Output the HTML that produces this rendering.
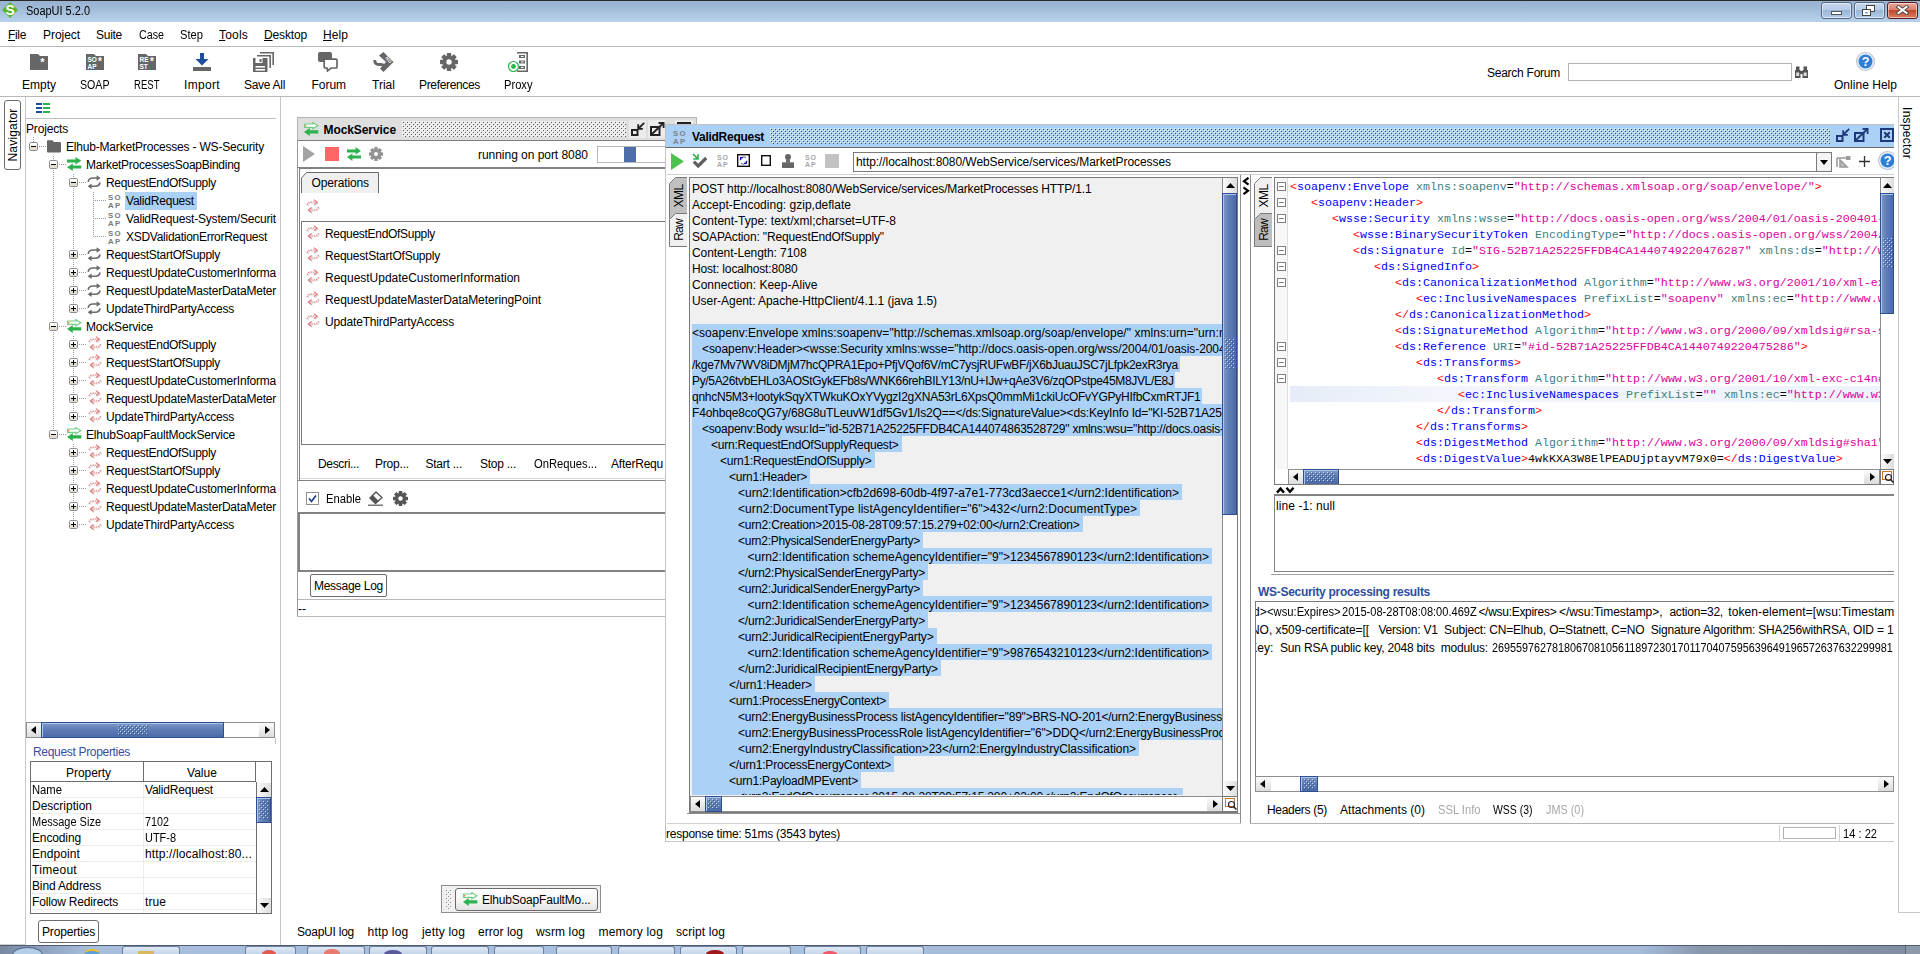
<!DOCTYPE html>
<html><head><meta charset="utf-8"><title>SoapUI 5.2.0</title>
<style>
html,body{margin:0;padding:0;}
body{width:1920px;height:954px;overflow:hidden;position:relative;background:#fff;font-family:"Liberation Sans",sans-serif;font-size:12px;color:#000;}
body div,body span,body svg{position:absolute;}
body span{white-space:pre;}
body span span, body svg *{position:static;}
.m{font-family:"Liberation Mono",monospace;}
</style></head><body>
<div style="left:0px;top:0px;width:1920px;height:22px;background:linear-gradient(#98b3d1 0%,#9db7d5 30%,#b0c9e4 75%,#b8d0ea 100%);"></div>
<div style="left:0px;top:0px;width:1920px;height:1px;background:#2b2b2b;"></div>
<svg style="left:2px;top:2px;" width="16" height="16" viewBox="0 0 18 18"><polygon points="9,0 18,9 9,18 0,9" fill="#5cb531"/><text x="9" y="14.6" text-anchor="middle" font-family="Liberation Sans,sans-serif" font-weight="bold" font-size="15.5" fill="#fff">S</text></svg>
<span style="left:26px;top:3.0px;line-height:16px;transform:scaleX(0.9135);transform-origin:0 50%;">SoapUI 5.2.0</span>
<div style="left:1821px;top:2px;width:31px;height:17px;background:linear-gradient(#c6d8ee,#b4cae6 48%,#9bb6d8 50%,#b3cbe8);border:1px solid #566a88;border-radius:3px;box-sizing:border-box;box-shadow:inset 0 0 0 1px rgba(255,255,255,.5);"></div>
<div style="left:1854px;top:2px;width:31px;height:17px;background:linear-gradient(#c6d8ee,#b4cae6 48%,#9bb6d8 50%,#b3cbe8);border:1px solid #566a88;border-radius:3px;box-sizing:border-box;box-shadow:inset 0 0 0 1px rgba(255,255,255,.5);"></div>
<div style="left:1887px;top:2px;width:31px;height:17px;background:linear-gradient(#e8a898,#d97f6a 48%,#c4452c 50%,#d98262);border:1px solid #5a1a22;border-radius:3px;box-sizing:border-box;box-shadow:inset 0 0 0 1px rgba(255,255,255,.5);"></div>
<div style="left:1831px;top:11px;width:11px;height:4px;background:#fff;border:1px solid #555;box-sizing:border-box;"></div>
<svg style="left:1862px;top:5px;" width="14" height="12" viewBox="0 0 14 12"><rect x="4.5" y="0.5" width="8" height="6" fill="#fff" stroke="#444"/><rect x="0.5" y="4.5" width="8" height="6" fill="#fff" stroke="#444"/><rect x="3" y="7" width="3" height="1.5" fill="#8aa4c8"/></svg>
<svg style="left:1896px;top:5px;" width="13" height="10" viewBox="0 0 13 10"><path d="M2.5 2 L10.5 8 M10.5 2 L2.5 8" stroke="#444" stroke-width="3.8" stroke-linecap="square"/><path d="M2.5 2 L10.5 8 M10.5 2 L2.5 8" stroke="#fff" stroke-width="2" stroke-linecap="square"/></svg>
<div style="left:0px;top:22px;width:1920px;height:24px;background:#fff;"></div>
<div style="left:0px;top:46px;width:1920px;height:1px;background:#b8b8b8;"></div>
<span style="left:8px;top:27.0px;line-height:16px;letter-spacing:-0.336px;"><span style="text-decoration:underline">F</span>ile</span>
<span style="left:43px;top:27.0px;line-height:16px;letter-spacing:-0.051px;">Project</span>
<span style="left:96px;top:27.0px;line-height:16px;letter-spacing:-0.272px;">Suite</span>
<span style="left:139px;top:27.0px;line-height:16px;transform:scaleX(0.8924);transform-origin:0 50%;">Case</span>
<span style="left:180px;top:27.0px;line-height:16px;transform:scaleX(0.9316);transform-origin:0 50%;">Step</span>
<span style="left:219px;top:27.0px;line-height:16px;letter-spacing:0.197px;"><span style="text-decoration:underline">T</span>ools</span>
<span style="left:264px;top:27.0px;line-height:16px;letter-spacing:-0.147px;"><span style="text-decoration:underline">D</span>esktop</span>
<span style="left:323px;top:27.0px;line-height:16px;letter-spacing:0.078px;"><span style="text-decoration:underline">H</span>elp</span>
<div style="left:0px;top:47px;width:1920px;height:49px;background:#fff;"></div>
<div style="left:0px;top:96px;width:1920px;height:1px;background:#b8b8b8;"></div>
<span style="left:22px;top:77.0px;line-height:16px;letter-spacing:-0.003px;">Empty</span>
<span style="left:80px;top:77.0px;line-height:16px;transform:scaleX(0.8843);transform-origin:0 50%;">SOAP</span>
<span style="left:134px;top:77.0px;line-height:16px;transform:scaleX(0.7965);transform-origin:0 50%;">REST</span>
<span style="left:184px;top:77.0px;line-height:16px;letter-spacing:0.331px;">Import</span>
<span style="left:244px;top:77.0px;line-height:16px;letter-spacing:-0.295px;">Save All</span>
<span style="left:311.5px;top:77.0px;line-height:16px;letter-spacing:-0.034px;">Forum</span>
<span style="left:372px;top:77.0px;line-height:16px;letter-spacing:0.022px;">Trial</span>
<span style="left:419px;top:77.0px;line-height:16px;letter-spacing:-0.337px;">Preferences</span>
<span style="left:504px;top:77.0px;line-height:16px;transform:scaleX(0.9287);transform-origin:0 50%;">Proxy</span>
<svg style="left:30px;top:53px;" width="18" height="17" viewBox="0 0 18 17"><path d="M0 1 H8 L10 3 H18 V17 H0 Z" fill="#666"/><text x="12.5" y="12.5" text-anchor="middle" font-size="11" font-family="Liberation Sans,sans-serif" font-weight="bold" fill="#fff">*</text></svg>
<svg style="left:86px;top:53px;" width="18" height="17" viewBox="0 0 18 17"><path d="M0 1 H8 L10 3 H18 V17 H0 Z" fill="#666"/><text x="1.5" y="9" font-size="6.5" font-family="Liberation Sans,sans-serif" font-weight="bold" fill="#fff">SO</text><text x="1.5" y="15.5" font-size="6.5" font-family="Liberation Sans,sans-serif" font-weight="bold" fill="#fff">AP</text><text x="14" y="12" text-anchor="middle" font-size="10" font-family="Liberation Sans,sans-serif" font-weight="bold" fill="#fff">*</text></svg>
<svg style="left:138px;top:53px;" width="18" height="17" viewBox="0 0 18 17"><path d="M0 1 H8 L10 3 H18 V17 H0 Z" fill="#666"/><text x="1.5" y="9" font-size="6.5" font-family="Liberation Sans,sans-serif" font-weight="bold" fill="#fff">RE</text><text x="1.5" y="15.5" font-size="6.5" font-family="Liberation Sans,sans-serif" font-weight="bold" fill="#fff">ST</text><text x="14" y="12" text-anchor="middle" font-size="10" font-family="Liberation Sans,sans-serif" font-weight="bold" fill="#fff">*</text></svg>
<svg style="left:193px;top:52px;" width="18" height="20" viewBox="0 0 18 20"><path d="M7 1 H11 V7 H15.5 L9 13.5 L2.5 7 H7 Z" fill="#1c4da0"/><rect x="0" y="15" width="18" height="4" fill="#666"/></svg>
<svg style="left:253px;top:52px;" width="21" height="20" viewBox="0 0 21 20"><path d="M7 0.8 H20.2 V13" fill="none" stroke="#666" stroke-width="1.6"/><path d="M4 3.8 H17.2 V16" fill="none" stroke="#666" stroke-width="1.6"/><path d="M0 6 H14.5 V20 H0 Z" fill="#666"/><rect x="2.5" y="6" width="7" height="5" fill="#fff"/><rect x="6.5" y="7" width="2" height="3" fill="#666"/><rect x="2.5" y="14" width="9.5" height="1.6" fill="#fff"/><rect x="2.5" y="17" width="9.5" height="1.6" fill="#fff"/></svg>
<svg style="left:318px;top:52px;" width="20" height="20" viewBox="0 0 20 20"><rect x="0" y="0" width="14" height="10" rx="2" fill="#666"/><path d="M7.2 7.2 H18 Q19 7.2 19 8.2 V15 Q19 16 18 16 H13 L9.5 19 L9 16 H7.2 Q6.2 16 6.2 15 V8.2 Q6.2 7.2 7.2 7.2 Z" fill="#fff" stroke="#666" stroke-width="1.7"/></svg>
<svg style="left:373px;top:52px;" width="21" height="20" viewBox="0 0 21 20"><polygon points="10.5,0 20.5,10 10.5,20 7,16.5 13,10 6,3.5" fill="#666"/><path d="M2 8 Q1 13 8 12.5 Q12 12.5 10 17" fill="none" stroke="#666" stroke-width="3"/><text x="14.5" y="9" font-size="4.5" text-anchor="middle" font-family="Liberation Sans,sans-serif" font-weight="bold" fill="#fff" transform="rotate(45 14.5 9)">NG</text></svg>
<svg style="left:440px;top:53px;" width="18" height="18" viewBox="0 0 18 18"><g transform="translate(9 9)" fill="#666"><rect x="-2.2" y="-9" width="4.4" height="18" rx="0.6" transform="rotate(0)"/><rect x="-2.2" y="-9" width="4.4" height="18" rx="0.6" transform="rotate(45)"/><rect x="-2.2" y="-9" width="4.4" height="18" rx="0.6" transform="rotate(90)"/><rect x="-2.2" y="-9" width="4.4" height="18" rx="0.6" transform="rotate(135)"/><circle r="6.6"/><circle r="2.7" fill="#fff"/></g></svg>
<svg style="left:508px;top:52px;" width="20" height="20" viewBox="0 0 20 20"><path d="M9 0.8 H19.2 V19.2 H9" fill="none" stroke="#666" stroke-width="1.6"/><rect x="11" y="3" width="6" height="3" fill="#666"/><rect x="11" y="8.5" width="6" height="3" fill="#666"/><rect x="11" y="14" width="6" height="3" fill="#666"/><rect x="13" y="4" width="2.5" height="1" fill="#fff"/><rect x="13" y="9.5" width="2.5" height="1" fill="#fff"/><rect x="13" y="15" width="2.5" height="1" fill="#fff"/><circle cx="5.5" cy="14.5" r="5" fill="#fff" stroke="#2db34a" stroke-width="1.2"/><circle cx="5.5" cy="14.5" r="2.4" fill="#2db34a"/></svg>
<span style="left:1487px;top:65.0px;line-height:16px;letter-spacing:-0.253px;">Search Forum</span>
<div style="left:1568px;top:63px;width:222px;height:16px;border:1px solid #b5b5b5;background:#fff;"></div>
<svg style="left:1795px;top:66px;" width="13" height="12" viewBox="0 0 13 12"><rect x="0" y="4" width="5.5" height="8" fill="#555"/><rect x="7.5" y="4" width="5.5" height="8" fill="#555"/><rect x="1" y="0.5" width="3.5" height="4" fill="#555"/><rect x="8.5" y="0.5" width="3.5" height="4" fill="#555"/><rect x="5" y="5" width="3" height="3" fill="#555"/><rect x="1.2" y="6.5" width="3" height="3.5" fill="#ddd"/><rect x="8.7" y="6.5" width="3" height="3.5" fill="#ddd"/></svg>
<svg style="left:1856px;top:52px;" width="19" height="19" viewBox="0 0 18 18"><circle cx="9" cy="9" r="8.5" fill="#e8eef6" stroke="#b8c4d4"/><circle cx="9" cy="9" r="6.6" fill="#2f7fd6"/><text x="9" y="13.2" text-anchor="middle" font-family="Liberation Sans,sans-serif" font-weight="bold" font-size="12" fill="#fff">?</text></svg>
<span style="left:1834px;top:77.0px;line-height:16px;letter-spacing:0.027px;">Online Help</span>
<div style="left:25px;top:97px;width:1px;height:849px;background:#c8c8c8;"></div>
<div style="left:4px;top:100px;width:17px;height:70px;background:#fff;border:1px solid #6b6b6b;border-radius:3px;box-sizing:border-box;"></div>
<span style="left:0px;top:-8.0px;line-height:16px;letter-spacing:0.182px;left:-22px;top:126.5px;width:70px;text-align:center;transform:rotate(-90deg);transform-origin:center;line-height:16px;">Navigator</span>
<div style="left:280px;top:97px;width:1px;height:849px;background:#c4c4c4;"></div>
<svg style="left:36px;top:103px;" width="14" height="10" viewBox="0 0 14 10"><rect x="0" y="0" width="6" height="2" fill="#1c4da0"/><rect x="0" y="4" width="6" height="2" fill="#1c4da0"/><rect x="0" y="8" width="6" height="2" fill="#1c4da0"/><rect x="7" y="0" width="7" height="2" fill="#2db34a"/><rect x="7" y="4" width="7" height="2" fill="#2db34a"/><rect x="7" y="8" width="7" height="2" fill="#2db34a"/></svg>
<div style="left:26px;top:118px;width:250px;height:1px;background:#c0c0c0;"></div>
<span style="left:26px;top:121.0px;line-height:16px;letter-spacing:-0.170px;">Projects</span>
<div style="left:33px;top:137px;width:1px;height:5px;background:repeating-linear-gradient(180deg,#9a9a9a 0 1px,transparent 1px 2px);"></div>
<div style="left:53px;top:156px;width:1px;height:279px;background:repeating-linear-gradient(180deg,#9a9a9a 0 1px,transparent 1px 2px);"></div>
<div style="left:73px;top:174px;width:1px;height:135px;background:repeating-linear-gradient(180deg,#9a9a9a 0 1px,transparent 1px 2px);"></div>
<div style="left:93px;top:192px;width:1px;height:45px;background:repeating-linear-gradient(180deg,#9a9a9a 0 1px,transparent 1px 2px);"></div>
<div style="left:73px;top:336px;width:1px;height:81px;background:repeating-linear-gradient(180deg,#9a9a9a 0 1px,transparent 1px 2px);"></div>
<div style="left:73px;top:444px;width:1px;height:81px;background:repeating-linear-gradient(180deg,#9a9a9a 0 1px,transparent 1px 2px);"></div>
<div style="left:39px;top:146px;width:7px;height:1px;background:repeating-linear-gradient(90deg,#9a9a9a 0 1px,transparent 1px 2px);"></div>
<svg style="left:29px;top:142px;" width="9" height="9" viewBox="0 0 9 9"><rect x="0.5" y="0.5" width="8" height="8" rx="1.2" fill="#fff" stroke="#8c8c8c"/><rect x="1" y="5" width="7" height="3" fill="#e4ded2"/><rect x="1" y="3.5" width="7" height="1.5" fill="#f4f1ea"/><rect x="2" y="4" width="5" height="1" fill="#000"/></svg>
<svg style="left:47px;top:139.5px;" width="14" height="13" viewBox="0 0 14 13"><path d="M0 1.3 Q0 0.3 1 0.3 H5.2 L7 2 H13 Q14 2 14 3 V11.5 Q14 12.5 13 12.5 H1 Q0 12.5 0 11.5 Z" fill="#666"/></svg>
<span style="left:66px;top:139.0px;line-height:16px;letter-spacing:-0.192px;">Elhub-MarketProcesses - WS-Security</span>
<div style="left:59px;top:164px;width:7px;height:1px;background:repeating-linear-gradient(90deg,#9a9a9a 0 1px,transparent 1px 2px);"></div>
<svg style="left:49px;top:160px;" width="9" height="9" viewBox="0 0 9 9"><rect x="0.5" y="0.5" width="8" height="8" rx="1.2" fill="#fff" stroke="#8c8c8c"/><rect x="1" y="5" width="7" height="3" fill="#e4ded2"/><rect x="1" y="3.5" width="7" height="1.5" fill="#f4f1ea"/><rect x="2" y="4" width="5" height="1" fill="#000"/></svg>
<svg style="left:67px;top:157px;" width="15" height="14" viewBox="0 0 15 14"><path d="M0 2.4 H8.5 V0 L14.3 3.8 L8.5 7.4 V5.4 H0 Z" fill="#2bb24c"/><path d="M14.3 8.6 H5.8 V6.4 L0 10.2 L5.8 14 V11.6 H14.3 Z" fill="#2bb24c"/></svg>
<span style="left:86px;top:157.0px;line-height:16px;letter-spacing:-0.260px;">MarketProcessesSoapBinding</span>
<div style="left:79px;top:182px;width:7px;height:1px;background:repeating-linear-gradient(90deg,#9a9a9a 0 1px,transparent 1px 2px);"></div>
<svg style="left:69px;top:178px;" width="9" height="9" viewBox="0 0 9 9"><rect x="0.5" y="0.5" width="8" height="8" rx="1.2" fill="#fff" stroke="#8c8c8c"/><rect x="1" y="5" width="7" height="3" fill="#e4ded2"/><rect x="1" y="3.5" width="7" height="1.5" fill="#f4f1ea"/><rect x="2" y="4" width="5" height="1" fill="#000"/></svg>
<svg style="left:87px;top:175px;" width="15" height="15" viewBox="0 0 15 15"><path d="M1.2 6.8 Q1.6 3 6 3 H10.5" fill="none" stroke="#6a6a6a" stroke-width="1.6"/><path d="M9.6 0.2 L13.6 3 L9.6 5.8 Z" fill="#6a6a6a"/><path d="M13 7.4 Q12.6 11.2 8.2 11.2 H3.7" fill="none" stroke="#6a6a6a" stroke-width="1.6"/><path d="M4.6 8.4 L0.6 11.2 L4.6 14 Z" fill="#6a6a6a"/></svg>
<span style="left:106px;top:175.0px;line-height:16px;letter-spacing:-0.300px;">RequestEndOfSupply</span>
<div style="left:93px;top:200px;width:13px;height:1px;background:repeating-linear-gradient(90deg,#9a9a9a 0 1px,transparent 1px 2px);"></div>
<svg style="left:108px;top:193px;" width="14" height="16" viewBox="0 0 14 16"><text font-family="Liberation Sans,sans-serif" font-weight="bold" font-size="7.8" fill="#7a7a7a"><tspan x="0" y="6.8">S</tspan><tspan x="6.6" y="6.8">O</tspan><tspan x="0" y="15">A</tspan><tspan x="7" y="15">P</tspan></text></svg>
<div style="left:125px;top:191.5px;width:72px;height:18px;background:#acd1f6;"></div>
<span style="left:126px;top:193.0px;line-height:16px;letter-spacing:-0.208px;">ValidRequest</span>
<div style="left:93px;top:218px;width:13px;height:1px;background:repeating-linear-gradient(90deg,#9a9a9a 0 1px,transparent 1px 2px);"></div>
<svg style="left:108px;top:211px;" width="14" height="16" viewBox="0 0 14 16"><text font-family="Liberation Sans,sans-serif" font-weight="bold" font-size="7.8" fill="#7a7a7a"><tspan x="0" y="6.8">S</tspan><tspan x="6.6" y="6.8">O</tspan><tspan x="0" y="15">A</tspan><tspan x="7" y="15">P</tspan></text></svg>
<span style="left:126px;top:211.0px;line-height:16px;letter-spacing:-0.192px;">ValidRequest-System/Securit</span>
<div style="left:93px;top:236px;width:13px;height:1px;background:repeating-linear-gradient(90deg,#9a9a9a 0 1px,transparent 1px 2px);"></div>
<svg style="left:108px;top:229px;" width="14" height="16" viewBox="0 0 14 16"><text font-family="Liberation Sans,sans-serif" font-weight="bold" font-size="7.8" fill="#7a7a7a"><tspan x="0" y="6.8">S</tspan><tspan x="6.6" y="6.8">O</tspan><tspan x="0" y="15">A</tspan><tspan x="7" y="15">P</tspan></text></svg>
<span style="left:126px;top:229.0px;line-height:16px;letter-spacing:-0.274px;">XSDValidationErrorRequest</span>
<div style="left:79px;top:254px;width:7px;height:1px;background:repeating-linear-gradient(90deg,#9a9a9a 0 1px,transparent 1px 2px);"></div>
<svg style="left:69px;top:250px;" width="9" height="9" viewBox="0 0 9 9"><rect x="0.5" y="0.5" width="8" height="8" rx="1.2" fill="#fff" stroke="#8c8c8c"/><rect x="1" y="5" width="7" height="3" fill="#e4ded2"/><rect x="1" y="3.5" width="7" height="1.5" fill="#f4f1ea"/><rect x="2" y="4" width="5" height="1" fill="#000"/><rect x="4" y="2" width="1" height="5" fill="#000"/></svg>
<svg style="left:87px;top:247px;" width="15" height="15" viewBox="0 0 15 15"><path d="M1.2 6.8 Q1.6 3 6 3 H10.5" fill="none" stroke="#6a6a6a" stroke-width="1.6"/><path d="M9.6 0.2 L13.6 3 L9.6 5.8 Z" fill="#6a6a6a"/><path d="M13 7.4 Q12.6 11.2 8.2 11.2 H3.7" fill="none" stroke="#6a6a6a" stroke-width="1.6"/><path d="M4.6 8.4 L0.6 11.2 L4.6 14 Z" fill="#6a6a6a"/></svg>
<span style="left:106px;top:247.0px;line-height:16px;letter-spacing:-0.270px;">RequestStartOfSupply</span>
<div style="left:79px;top:272px;width:7px;height:1px;background:repeating-linear-gradient(90deg,#9a9a9a 0 1px,transparent 1px 2px);"></div>
<svg style="left:69px;top:268px;" width="9" height="9" viewBox="0 0 9 9"><rect x="0.5" y="0.5" width="8" height="8" rx="1.2" fill="#fff" stroke="#8c8c8c"/><rect x="1" y="5" width="7" height="3" fill="#e4ded2"/><rect x="1" y="3.5" width="7" height="1.5" fill="#f4f1ea"/><rect x="2" y="4" width="5" height="1" fill="#000"/><rect x="4" y="2" width="1" height="5" fill="#000"/></svg>
<svg style="left:87px;top:265px;" width="15" height="15" viewBox="0 0 15 15"><path d="M1.2 6.8 Q1.6 3 6 3 H10.5" fill="none" stroke="#6a6a6a" stroke-width="1.6"/><path d="M9.6 0.2 L13.6 3 L9.6 5.8 Z" fill="#6a6a6a"/><path d="M13 7.4 Q12.6 11.2 8.2 11.2 H3.7" fill="none" stroke="#6a6a6a" stroke-width="1.6"/><path d="M4.6 8.4 L0.6 11.2 L4.6 14 Z" fill="#6a6a6a"/></svg>
<span style="left:106px;top:265.0px;line-height:16px;letter-spacing:-0.218px;">RequestUpdateCustomerInforma</span>
<div style="left:79px;top:290px;width:7px;height:1px;background:repeating-linear-gradient(90deg,#9a9a9a 0 1px,transparent 1px 2px);"></div>
<svg style="left:69px;top:286px;" width="9" height="9" viewBox="0 0 9 9"><rect x="0.5" y="0.5" width="8" height="8" rx="1.2" fill="#fff" stroke="#8c8c8c"/><rect x="1" y="5" width="7" height="3" fill="#e4ded2"/><rect x="1" y="3.5" width="7" height="1.5" fill="#f4f1ea"/><rect x="2" y="4" width="5" height="1" fill="#000"/><rect x="4" y="2" width="1" height="5" fill="#000"/></svg>
<svg style="left:87px;top:283px;" width="15" height="15" viewBox="0 0 15 15"><path d="M1.2 6.8 Q1.6 3 6 3 H10.5" fill="none" stroke="#6a6a6a" stroke-width="1.6"/><path d="M9.6 0.2 L13.6 3 L9.6 5.8 Z" fill="#6a6a6a"/><path d="M13 7.4 Q12.6 11.2 8.2 11.2 H3.7" fill="none" stroke="#6a6a6a" stroke-width="1.6"/><path d="M4.6 8.4 L0.6 11.2 L4.6 14 Z" fill="#6a6a6a"/></svg>
<span style="left:106px;top:283.0px;line-height:16px;letter-spacing:-0.218px;">RequestUpdateMasterDataMeter</span>
<div style="left:79px;top:308px;width:7px;height:1px;background:repeating-linear-gradient(90deg,#9a9a9a 0 1px,transparent 1px 2px);"></div>
<svg style="left:69px;top:304px;" width="9" height="9" viewBox="0 0 9 9"><rect x="0.5" y="0.5" width="8" height="8" rx="1.2" fill="#fff" stroke="#8c8c8c"/><rect x="1" y="5" width="7" height="3" fill="#e4ded2"/><rect x="1" y="3.5" width="7" height="1.5" fill="#f4f1ea"/><rect x="2" y="4" width="5" height="1" fill="#000"/><rect x="4" y="2" width="1" height="5" fill="#000"/></svg>
<svg style="left:87px;top:301px;" width="15" height="15" viewBox="0 0 15 15"><path d="M1.2 6.8 Q1.6 3 6 3 H10.5" fill="none" stroke="#6a6a6a" stroke-width="1.6"/><path d="M9.6 0.2 L13.6 3 L9.6 5.8 Z" fill="#6a6a6a"/><path d="M13 7.4 Q12.6 11.2 8.2 11.2 H3.7" fill="none" stroke="#6a6a6a" stroke-width="1.6"/><path d="M4.6 8.4 L0.6 11.2 L4.6 14 Z" fill="#6a6a6a"/></svg>
<span style="left:106px;top:301.0px;line-height:16px;letter-spacing:-0.215px;">UpdateThirdPartyAccess</span>
<div style="left:59px;top:326px;width:7px;height:1px;background:repeating-linear-gradient(90deg,#9a9a9a 0 1px,transparent 1px 2px);"></div>
<svg style="left:49px;top:322px;" width="9" height="9" viewBox="0 0 9 9"><rect x="0.5" y="0.5" width="8" height="8" rx="1.2" fill="#fff" stroke="#8c8c8c"/><rect x="1" y="5" width="7" height="3" fill="#e4ded2"/><rect x="1" y="3.5" width="7" height="1.5" fill="#f4f1ea"/><rect x="2" y="4" width="5" height="1" fill="#000"/></svg>
<svg style="left:67px;top:319px;" width="15" height="14" viewBox="0 0 15 14"><path d="M0.6 2 H8.8 V0.6 L13.9 3.7 L8.8 6.8 V5.4 H0.6 Z" fill="#fff" stroke="#6fcd85" stroke-width="1.1"/><rect x="1" y="3" width="1.3" height="1.3" fill="#f08030"/><path d="M14.3 8.2 H5.8 V6 L0 10 L5.8 14 V11.6 H14.3 Z" fill="#2bb24c"/></svg>
<span style="left:86px;top:319.0px;line-height:16px;letter-spacing:-0.153px;">MockService</span>
<div style="left:79px;top:344px;width:7px;height:1px;background:repeating-linear-gradient(90deg,#9a9a9a 0 1px,transparent 1px 2px);"></div>
<svg style="left:69px;top:340px;" width="9" height="9" viewBox="0 0 9 9"><rect x="0.5" y="0.5" width="8" height="8" rx="1.2" fill="#fff" stroke="#8c8c8c"/><rect x="1" y="5" width="7" height="3" fill="#e4ded2"/><rect x="1" y="3.5" width="7" height="1.5" fill="#f4f1ea"/><rect x="2" y="4" width="5" height="1" fill="#000"/><rect x="4" y="2" width="1" height="5" fill="#000"/></svg>
<svg style="left:88px;top:336px;" width="14" height="15" viewBox="0 0 14 15"><g transform="scale(1.08)"><g transform="translate(0.8 0.8)"><path d="M1 5.5 Q1.5 2.8 5 2.8 H9" fill="none" stroke="#d4d4d4" stroke-width="1.1" stroke-dasharray="1.3 0.9"/><path d="M7.3 0.6 L10.3 2.9 L7.3 5.2" fill="none" stroke="#d4d4d4" stroke-width="1.1"/><path d="M11.5 7.5 Q11 10.2 7.5 10.2 H3.5" fill="none" stroke="#d4d4d4" stroke-width="1.1" stroke-dasharray="1.3 0.9"/><path d="M5.2 7.9 L2.2 10.2 L5.2 12.5" fill="none" stroke="#d4d4d4" stroke-width="1.1"/></g><path d="M1 5.5 Q1.5 2.8 5 2.8 H9" fill="none" stroke="#e57878" stroke-width="1.1" stroke-dasharray="1.3 0.9"/><path d="M7.3 0.6 L10.3 2.9 L7.3 5.2" fill="none" stroke="#e57878" stroke-width="1.1"/><path d="M11.5 7.5 Q11 10.2 7.5 10.2 H3.5" fill="none" stroke="#e57878" stroke-width="1.1" stroke-dasharray="1.3 0.9"/><path d="M5.2 7.9 L2.2 10.2 L5.2 12.5" fill="none" stroke="#e57878" stroke-width="1.1"/></g></svg>
<span style="left:106px;top:337.0px;line-height:16px;letter-spacing:-0.300px;">RequestEndOfSupply</span>
<div style="left:79px;top:362px;width:7px;height:1px;background:repeating-linear-gradient(90deg,#9a9a9a 0 1px,transparent 1px 2px);"></div>
<svg style="left:69px;top:358px;" width="9" height="9" viewBox="0 0 9 9"><rect x="0.5" y="0.5" width="8" height="8" rx="1.2" fill="#fff" stroke="#8c8c8c"/><rect x="1" y="5" width="7" height="3" fill="#e4ded2"/><rect x="1" y="3.5" width="7" height="1.5" fill="#f4f1ea"/><rect x="2" y="4" width="5" height="1" fill="#000"/><rect x="4" y="2" width="1" height="5" fill="#000"/></svg>
<svg style="left:88px;top:354px;" width="14" height="15" viewBox="0 0 14 15"><g transform="scale(1.08)"><g transform="translate(0.8 0.8)"><path d="M1 5.5 Q1.5 2.8 5 2.8 H9" fill="none" stroke="#d4d4d4" stroke-width="1.1" stroke-dasharray="1.3 0.9"/><path d="M7.3 0.6 L10.3 2.9 L7.3 5.2" fill="none" stroke="#d4d4d4" stroke-width="1.1"/><path d="M11.5 7.5 Q11 10.2 7.5 10.2 H3.5" fill="none" stroke="#d4d4d4" stroke-width="1.1" stroke-dasharray="1.3 0.9"/><path d="M5.2 7.9 L2.2 10.2 L5.2 12.5" fill="none" stroke="#d4d4d4" stroke-width="1.1"/></g><path d="M1 5.5 Q1.5 2.8 5 2.8 H9" fill="none" stroke="#e57878" stroke-width="1.1" stroke-dasharray="1.3 0.9"/><path d="M7.3 0.6 L10.3 2.9 L7.3 5.2" fill="none" stroke="#e57878" stroke-width="1.1"/><path d="M11.5 7.5 Q11 10.2 7.5 10.2 H3.5" fill="none" stroke="#e57878" stroke-width="1.1" stroke-dasharray="1.3 0.9"/><path d="M5.2 7.9 L2.2 10.2 L5.2 12.5" fill="none" stroke="#e57878" stroke-width="1.1"/></g></svg>
<span style="left:106px;top:355.0px;line-height:16px;letter-spacing:-0.270px;">RequestStartOfSupply</span>
<div style="left:79px;top:380px;width:7px;height:1px;background:repeating-linear-gradient(90deg,#9a9a9a 0 1px,transparent 1px 2px);"></div>
<svg style="left:69px;top:376px;" width="9" height="9" viewBox="0 0 9 9"><rect x="0.5" y="0.5" width="8" height="8" rx="1.2" fill="#fff" stroke="#8c8c8c"/><rect x="1" y="5" width="7" height="3" fill="#e4ded2"/><rect x="1" y="3.5" width="7" height="1.5" fill="#f4f1ea"/><rect x="2" y="4" width="5" height="1" fill="#000"/><rect x="4" y="2" width="1" height="5" fill="#000"/></svg>
<svg style="left:88px;top:372px;" width="14" height="15" viewBox="0 0 14 15"><g transform="scale(1.08)"><g transform="translate(0.8 0.8)"><path d="M1 5.5 Q1.5 2.8 5 2.8 H9" fill="none" stroke="#d4d4d4" stroke-width="1.1" stroke-dasharray="1.3 0.9"/><path d="M7.3 0.6 L10.3 2.9 L7.3 5.2" fill="none" stroke="#d4d4d4" stroke-width="1.1"/><path d="M11.5 7.5 Q11 10.2 7.5 10.2 H3.5" fill="none" stroke="#d4d4d4" stroke-width="1.1" stroke-dasharray="1.3 0.9"/><path d="M5.2 7.9 L2.2 10.2 L5.2 12.5" fill="none" stroke="#d4d4d4" stroke-width="1.1"/></g><path d="M1 5.5 Q1.5 2.8 5 2.8 H9" fill="none" stroke="#e57878" stroke-width="1.1" stroke-dasharray="1.3 0.9"/><path d="M7.3 0.6 L10.3 2.9 L7.3 5.2" fill="none" stroke="#e57878" stroke-width="1.1"/><path d="M11.5 7.5 Q11 10.2 7.5 10.2 H3.5" fill="none" stroke="#e57878" stroke-width="1.1" stroke-dasharray="1.3 0.9"/><path d="M5.2 7.9 L2.2 10.2 L5.2 12.5" fill="none" stroke="#e57878" stroke-width="1.1"/></g></svg>
<span style="left:106px;top:373.0px;line-height:16px;letter-spacing:-0.218px;">RequestUpdateCustomerInforma</span>
<div style="left:79px;top:398px;width:7px;height:1px;background:repeating-linear-gradient(90deg,#9a9a9a 0 1px,transparent 1px 2px);"></div>
<svg style="left:69px;top:394px;" width="9" height="9" viewBox="0 0 9 9"><rect x="0.5" y="0.5" width="8" height="8" rx="1.2" fill="#fff" stroke="#8c8c8c"/><rect x="1" y="5" width="7" height="3" fill="#e4ded2"/><rect x="1" y="3.5" width="7" height="1.5" fill="#f4f1ea"/><rect x="2" y="4" width="5" height="1" fill="#000"/><rect x="4" y="2" width="1" height="5" fill="#000"/></svg>
<svg style="left:88px;top:390px;" width="14" height="15" viewBox="0 0 14 15"><g transform="scale(1.08)"><g transform="translate(0.8 0.8)"><path d="M1 5.5 Q1.5 2.8 5 2.8 H9" fill="none" stroke="#d4d4d4" stroke-width="1.1" stroke-dasharray="1.3 0.9"/><path d="M7.3 0.6 L10.3 2.9 L7.3 5.2" fill="none" stroke="#d4d4d4" stroke-width="1.1"/><path d="M11.5 7.5 Q11 10.2 7.5 10.2 H3.5" fill="none" stroke="#d4d4d4" stroke-width="1.1" stroke-dasharray="1.3 0.9"/><path d="M5.2 7.9 L2.2 10.2 L5.2 12.5" fill="none" stroke="#d4d4d4" stroke-width="1.1"/></g><path d="M1 5.5 Q1.5 2.8 5 2.8 H9" fill="none" stroke="#e57878" stroke-width="1.1" stroke-dasharray="1.3 0.9"/><path d="M7.3 0.6 L10.3 2.9 L7.3 5.2" fill="none" stroke="#e57878" stroke-width="1.1"/><path d="M11.5 7.5 Q11 10.2 7.5 10.2 H3.5" fill="none" stroke="#e57878" stroke-width="1.1" stroke-dasharray="1.3 0.9"/><path d="M5.2 7.9 L2.2 10.2 L5.2 12.5" fill="none" stroke="#e57878" stroke-width="1.1"/></g></svg>
<span style="left:106px;top:391.0px;line-height:16px;letter-spacing:-0.218px;">RequestUpdateMasterDataMeter</span>
<div style="left:79px;top:416px;width:7px;height:1px;background:repeating-linear-gradient(90deg,#9a9a9a 0 1px,transparent 1px 2px);"></div>
<svg style="left:69px;top:412px;" width="9" height="9" viewBox="0 0 9 9"><rect x="0.5" y="0.5" width="8" height="8" rx="1.2" fill="#fff" stroke="#8c8c8c"/><rect x="1" y="5" width="7" height="3" fill="#e4ded2"/><rect x="1" y="3.5" width="7" height="1.5" fill="#f4f1ea"/><rect x="2" y="4" width="5" height="1" fill="#000"/><rect x="4" y="2" width="1" height="5" fill="#000"/></svg>
<svg style="left:88px;top:408px;" width="14" height="15" viewBox="0 0 14 15"><g transform="scale(1.08)"><g transform="translate(0.8 0.8)"><path d="M1 5.5 Q1.5 2.8 5 2.8 H9" fill="none" stroke="#d4d4d4" stroke-width="1.1" stroke-dasharray="1.3 0.9"/><path d="M7.3 0.6 L10.3 2.9 L7.3 5.2" fill="none" stroke="#d4d4d4" stroke-width="1.1"/><path d="M11.5 7.5 Q11 10.2 7.5 10.2 H3.5" fill="none" stroke="#d4d4d4" stroke-width="1.1" stroke-dasharray="1.3 0.9"/><path d="M5.2 7.9 L2.2 10.2 L5.2 12.5" fill="none" stroke="#d4d4d4" stroke-width="1.1"/></g><path d="M1 5.5 Q1.5 2.8 5 2.8 H9" fill="none" stroke="#e57878" stroke-width="1.1" stroke-dasharray="1.3 0.9"/><path d="M7.3 0.6 L10.3 2.9 L7.3 5.2" fill="none" stroke="#e57878" stroke-width="1.1"/><path d="M11.5 7.5 Q11 10.2 7.5 10.2 H3.5" fill="none" stroke="#e57878" stroke-width="1.1" stroke-dasharray="1.3 0.9"/><path d="M5.2 7.9 L2.2 10.2 L5.2 12.5" fill="none" stroke="#e57878" stroke-width="1.1"/></g></svg>
<span style="left:106px;top:409.0px;line-height:16px;letter-spacing:-0.215px;">UpdateThirdPartyAccess</span>
<div style="left:59px;top:434px;width:7px;height:1px;background:repeating-linear-gradient(90deg,#9a9a9a 0 1px,transparent 1px 2px);"></div>
<svg style="left:49px;top:430px;" width="9" height="9" viewBox="0 0 9 9"><rect x="0.5" y="0.5" width="8" height="8" rx="1.2" fill="#fff" stroke="#8c8c8c"/><rect x="1" y="5" width="7" height="3" fill="#e4ded2"/><rect x="1" y="3.5" width="7" height="1.5" fill="#f4f1ea"/><rect x="2" y="4" width="5" height="1" fill="#000"/></svg>
<svg style="left:67px;top:427px;" width="15" height="14" viewBox="0 0 15 14"><path d="M0.6 2 H8.8 V0.6 L13.9 3.7 L8.8 6.8 V5.4 H0.6 Z" fill="#fff" stroke="#6fcd85" stroke-width="1.1"/><rect x="1" y="3" width="1.3" height="1.3" fill="#f08030"/><path d="M14.3 8.2 H5.8 V6 L0 10 L5.8 14 V11.6 H14.3 Z" fill="#2bb24c"/></svg>
<span style="left:86px;top:427.0px;line-height:16px;letter-spacing:-0.203px;">ElhubSoapFaultMockService</span>
<div style="left:79px;top:452px;width:7px;height:1px;background:repeating-linear-gradient(90deg,#9a9a9a 0 1px,transparent 1px 2px);"></div>
<svg style="left:69px;top:448px;" width="9" height="9" viewBox="0 0 9 9"><rect x="0.5" y="0.5" width="8" height="8" rx="1.2" fill="#fff" stroke="#8c8c8c"/><rect x="1" y="5" width="7" height="3" fill="#e4ded2"/><rect x="1" y="3.5" width="7" height="1.5" fill="#f4f1ea"/><rect x="2" y="4" width="5" height="1" fill="#000"/><rect x="4" y="2" width="1" height="5" fill="#000"/></svg>
<svg style="left:88px;top:444px;" width="14" height="15" viewBox="0 0 14 15"><g transform="scale(1.08)"><g transform="translate(0.8 0.8)"><path d="M1 5.5 Q1.5 2.8 5 2.8 H9" fill="none" stroke="#d4d4d4" stroke-width="1.1" stroke-dasharray="1.3 0.9"/><path d="M7.3 0.6 L10.3 2.9 L7.3 5.2" fill="none" stroke="#d4d4d4" stroke-width="1.1"/><path d="M11.5 7.5 Q11 10.2 7.5 10.2 H3.5" fill="none" stroke="#d4d4d4" stroke-width="1.1" stroke-dasharray="1.3 0.9"/><path d="M5.2 7.9 L2.2 10.2 L5.2 12.5" fill="none" stroke="#d4d4d4" stroke-width="1.1"/></g><path d="M1 5.5 Q1.5 2.8 5 2.8 H9" fill="none" stroke="#e57878" stroke-width="1.1" stroke-dasharray="1.3 0.9"/><path d="M7.3 0.6 L10.3 2.9 L7.3 5.2" fill="none" stroke="#e57878" stroke-width="1.1"/><path d="M11.5 7.5 Q11 10.2 7.5 10.2 H3.5" fill="none" stroke="#e57878" stroke-width="1.1" stroke-dasharray="1.3 0.9"/><path d="M5.2 7.9 L2.2 10.2 L5.2 12.5" fill="none" stroke="#e57878" stroke-width="1.1"/></g></svg>
<span style="left:106px;top:445.0px;line-height:16px;letter-spacing:-0.300px;">RequestEndOfSupply</span>
<div style="left:79px;top:470px;width:7px;height:1px;background:repeating-linear-gradient(90deg,#9a9a9a 0 1px,transparent 1px 2px);"></div>
<svg style="left:69px;top:466px;" width="9" height="9" viewBox="0 0 9 9"><rect x="0.5" y="0.5" width="8" height="8" rx="1.2" fill="#fff" stroke="#8c8c8c"/><rect x="1" y="5" width="7" height="3" fill="#e4ded2"/><rect x="1" y="3.5" width="7" height="1.5" fill="#f4f1ea"/><rect x="2" y="4" width="5" height="1" fill="#000"/><rect x="4" y="2" width="1" height="5" fill="#000"/></svg>
<svg style="left:88px;top:462px;" width="14" height="15" viewBox="0 0 14 15"><g transform="scale(1.08)"><g transform="translate(0.8 0.8)"><path d="M1 5.5 Q1.5 2.8 5 2.8 H9" fill="none" stroke="#d4d4d4" stroke-width="1.1" stroke-dasharray="1.3 0.9"/><path d="M7.3 0.6 L10.3 2.9 L7.3 5.2" fill="none" stroke="#d4d4d4" stroke-width="1.1"/><path d="M11.5 7.5 Q11 10.2 7.5 10.2 H3.5" fill="none" stroke="#d4d4d4" stroke-width="1.1" stroke-dasharray="1.3 0.9"/><path d="M5.2 7.9 L2.2 10.2 L5.2 12.5" fill="none" stroke="#d4d4d4" stroke-width="1.1"/></g><path d="M1 5.5 Q1.5 2.8 5 2.8 H9" fill="none" stroke="#e57878" stroke-width="1.1" stroke-dasharray="1.3 0.9"/><path d="M7.3 0.6 L10.3 2.9 L7.3 5.2" fill="none" stroke="#e57878" stroke-width="1.1"/><path d="M11.5 7.5 Q11 10.2 7.5 10.2 H3.5" fill="none" stroke="#e57878" stroke-width="1.1" stroke-dasharray="1.3 0.9"/><path d="M5.2 7.9 L2.2 10.2 L5.2 12.5" fill="none" stroke="#e57878" stroke-width="1.1"/></g></svg>
<span style="left:106px;top:463.0px;line-height:16px;letter-spacing:-0.270px;">RequestStartOfSupply</span>
<div style="left:79px;top:488px;width:7px;height:1px;background:repeating-linear-gradient(90deg,#9a9a9a 0 1px,transparent 1px 2px);"></div>
<svg style="left:69px;top:484px;" width="9" height="9" viewBox="0 0 9 9"><rect x="0.5" y="0.5" width="8" height="8" rx="1.2" fill="#fff" stroke="#8c8c8c"/><rect x="1" y="5" width="7" height="3" fill="#e4ded2"/><rect x="1" y="3.5" width="7" height="1.5" fill="#f4f1ea"/><rect x="2" y="4" width="5" height="1" fill="#000"/><rect x="4" y="2" width="1" height="5" fill="#000"/></svg>
<svg style="left:88px;top:480px;" width="14" height="15" viewBox="0 0 14 15"><g transform="scale(1.08)"><g transform="translate(0.8 0.8)"><path d="M1 5.5 Q1.5 2.8 5 2.8 H9" fill="none" stroke="#d4d4d4" stroke-width="1.1" stroke-dasharray="1.3 0.9"/><path d="M7.3 0.6 L10.3 2.9 L7.3 5.2" fill="none" stroke="#d4d4d4" stroke-width="1.1"/><path d="M11.5 7.5 Q11 10.2 7.5 10.2 H3.5" fill="none" stroke="#d4d4d4" stroke-width="1.1" stroke-dasharray="1.3 0.9"/><path d="M5.2 7.9 L2.2 10.2 L5.2 12.5" fill="none" stroke="#d4d4d4" stroke-width="1.1"/></g><path d="M1 5.5 Q1.5 2.8 5 2.8 H9" fill="none" stroke="#e57878" stroke-width="1.1" stroke-dasharray="1.3 0.9"/><path d="M7.3 0.6 L10.3 2.9 L7.3 5.2" fill="none" stroke="#e57878" stroke-width="1.1"/><path d="M11.5 7.5 Q11 10.2 7.5 10.2 H3.5" fill="none" stroke="#e57878" stroke-width="1.1" stroke-dasharray="1.3 0.9"/><path d="M5.2 7.9 L2.2 10.2 L5.2 12.5" fill="none" stroke="#e57878" stroke-width="1.1"/></g></svg>
<span style="left:106px;top:481.0px;line-height:16px;letter-spacing:-0.218px;">RequestUpdateCustomerInforma</span>
<div style="left:79px;top:506px;width:7px;height:1px;background:repeating-linear-gradient(90deg,#9a9a9a 0 1px,transparent 1px 2px);"></div>
<svg style="left:69px;top:502px;" width="9" height="9" viewBox="0 0 9 9"><rect x="0.5" y="0.5" width="8" height="8" rx="1.2" fill="#fff" stroke="#8c8c8c"/><rect x="1" y="5" width="7" height="3" fill="#e4ded2"/><rect x="1" y="3.5" width="7" height="1.5" fill="#f4f1ea"/><rect x="2" y="4" width="5" height="1" fill="#000"/><rect x="4" y="2" width="1" height="5" fill="#000"/></svg>
<svg style="left:88px;top:498px;" width="14" height="15" viewBox="0 0 14 15"><g transform="scale(1.08)"><g transform="translate(0.8 0.8)"><path d="M1 5.5 Q1.5 2.8 5 2.8 H9" fill="none" stroke="#d4d4d4" stroke-width="1.1" stroke-dasharray="1.3 0.9"/><path d="M7.3 0.6 L10.3 2.9 L7.3 5.2" fill="none" stroke="#d4d4d4" stroke-width="1.1"/><path d="M11.5 7.5 Q11 10.2 7.5 10.2 H3.5" fill="none" stroke="#d4d4d4" stroke-width="1.1" stroke-dasharray="1.3 0.9"/><path d="M5.2 7.9 L2.2 10.2 L5.2 12.5" fill="none" stroke="#d4d4d4" stroke-width="1.1"/></g><path d="M1 5.5 Q1.5 2.8 5 2.8 H9" fill="none" stroke="#e57878" stroke-width="1.1" stroke-dasharray="1.3 0.9"/><path d="M7.3 0.6 L10.3 2.9 L7.3 5.2" fill="none" stroke="#e57878" stroke-width="1.1"/><path d="M11.5 7.5 Q11 10.2 7.5 10.2 H3.5" fill="none" stroke="#e57878" stroke-width="1.1" stroke-dasharray="1.3 0.9"/><path d="M5.2 7.9 L2.2 10.2 L5.2 12.5" fill="none" stroke="#e57878" stroke-width="1.1"/></g></svg>
<span style="left:106px;top:499.0px;line-height:16px;letter-spacing:-0.218px;">RequestUpdateMasterDataMeter</span>
<div style="left:79px;top:524px;width:7px;height:1px;background:repeating-linear-gradient(90deg,#9a9a9a 0 1px,transparent 1px 2px);"></div>
<svg style="left:69px;top:520px;" width="9" height="9" viewBox="0 0 9 9"><rect x="0.5" y="0.5" width="8" height="8" rx="1.2" fill="#fff" stroke="#8c8c8c"/><rect x="1" y="5" width="7" height="3" fill="#e4ded2"/><rect x="1" y="3.5" width="7" height="1.5" fill="#f4f1ea"/><rect x="2" y="4" width="5" height="1" fill="#000"/><rect x="4" y="2" width="1" height="5" fill="#000"/></svg>
<svg style="left:88px;top:516px;" width="14" height="15" viewBox="0 0 14 15"><g transform="scale(1.08)"><g transform="translate(0.8 0.8)"><path d="M1 5.5 Q1.5 2.8 5 2.8 H9" fill="none" stroke="#d4d4d4" stroke-width="1.1" stroke-dasharray="1.3 0.9"/><path d="M7.3 0.6 L10.3 2.9 L7.3 5.2" fill="none" stroke="#d4d4d4" stroke-width="1.1"/><path d="M11.5 7.5 Q11 10.2 7.5 10.2 H3.5" fill="none" stroke="#d4d4d4" stroke-width="1.1" stroke-dasharray="1.3 0.9"/><path d="M5.2 7.9 L2.2 10.2 L5.2 12.5" fill="none" stroke="#d4d4d4" stroke-width="1.1"/></g><path d="M1 5.5 Q1.5 2.8 5 2.8 H9" fill="none" stroke="#e57878" stroke-width="1.1" stroke-dasharray="1.3 0.9"/><path d="M7.3 0.6 L10.3 2.9 L7.3 5.2" fill="none" stroke="#e57878" stroke-width="1.1"/><path d="M11.5 7.5 Q11 10.2 7.5 10.2 H3.5" fill="none" stroke="#e57878" stroke-width="1.1" stroke-dasharray="1.3 0.9"/><path d="M5.2 7.9 L2.2 10.2 L5.2 12.5" fill="none" stroke="#e57878" stroke-width="1.1"/></g></svg>
<span style="left:106px;top:517.0px;line-height:16px;letter-spacing:-0.215px;">UpdateThirdPartyAccess</span>
<div style="left:26px;top:722px;width:249px;height:16px;background:#fff;border:1px solid #8e8e8e;box-sizing:border-box;"></div>
<div style="left:27px;top:723px;width:15px;height:14px;background:linear-gradient(#fbfbfb,#dcdcdc);"></div>
<div style="left:259px;top:723px;width:15px;height:14px;background:linear-gradient(#fbfbfb,#dcdcdc);"></div>
<svg style="left:31px;top:726px;" width="5" height="8" viewBox="0 0 5 8"><path d="M5 0 L0 4 L5 8 Z" fill="#000"/></svg>
<svg style="left:265px;top:726px;" width="5" height="8" viewBox="0 0 5 8"><path d="M0 0 L5 4 L0 8 Z" fill="#000"/></svg>
<div style="left:41px;top:722px;width:183px;height:16px;background:linear-gradient(#8098c6,#5f7db5 45%,#4c6aa6);border:1px solid #2f4f90;box-sizing:border-box;box-shadow:inset 1px 1px 0 #a8c8f0;"></div>
<div style="left:118px;top:725px;width:30px;height:10px;background:linear-gradient(90deg,#c8d8f0 1px,transparent 1px) 0px 0/4px 4px;-webkit-mask:linear-gradient(180deg,#000 1px,transparent 1px) 0 0px/4px 4px;mask:linear-gradient(180deg,#000 1px,transparent 1px) 0 0px/4px 4px;"></div>
<div style="left:118px;top:725px;width:30px;height:10px;background:linear-gradient(90deg,#c8d8f0 1px,transparent 1px) 2px 0/4px 4px;-webkit-mask:linear-gradient(180deg,#000 1px,transparent 1px) 0 2px/4px 4px;mask:linear-gradient(180deg,#000 1px,transparent 1px) 0 2px/4px 4px;"></div>
<div style="left:118px;top:725px;width:30px;height:10px;background:linear-gradient(90deg,#3a5590 1px,transparent 1px) 1px 0/4px 4px;-webkit-mask:linear-gradient(180deg,#000 1px,transparent 1px) 0 1px/4px 4px;mask:linear-gradient(180deg,#000 1px,transparent 1px) 0 1px/4px 4px;"></div>
<div style="left:118px;top:725px;width:30px;height:10px;background:linear-gradient(90deg,#3a5590 1px,transparent 1px) 3px 0/4px 4px;-webkit-mask:linear-gradient(180deg,#000 1px,transparent 1px) 0 3px/4px 4px;mask:linear-gradient(180deg,#000 1px,transparent 1px) 0 3px/4px 4px;"></div>
<div style="left:275px;top:738px;width:1px;height:6px;background:#c8c8c8;"></div>
<span style="left:33px;top:744.0px;line-height:16px;color:#3c4c9c;letter-spacing:-0.319px;">Request Properties</span>
<div style="left:30px;top:761px;width:240px;height:151px;border:1px solid #6d6d6d;background:#fff;"></div>
<div style="left:31px;top:762px;width:240px;height:19px;background:#fff;"></div>
<div style="left:31px;top:781px;width:225px;height:1px;background:#6d6d6d;"></div>
<div style="left:143px;top:762px;width:1px;height:20px;background:#6d6d6d;"></div>
<div style="left:255px;top:762px;width:1px;height:20px;background:#6d6d6d;"></div>
<span style="left:66px;top:765.0px;line-height:16px;letter-spacing:-0.045px;">Property</span>
<span style="left:187px;top:765.0px;line-height:16px;letter-spacing:0.037px;">Value</span>
<span style="left:32px;top:782.0px;line-height:16px;transform:scaleX(0.9370);transform-origin:0 50%;">Name</span>
<span style="left:145px;top:782.0px;line-height:16px;letter-spacing:-0.208px;">ValidRequest</span>
<div style="left:31px;top:797px;width:225px;height:1px;background:#ececec;"></div>
<span style="left:32px;top:798.0px;line-height:16px;letter-spacing:-0.003px;">Description</span>
<div style="left:31px;top:813px;width:225px;height:1px;background:#ececec;"></div>
<span style="left:32px;top:814.0px;line-height:16px;transform:scaleX(0.9154);transform-origin:0 50%;">Message Size</span>
<span style="left:145px;top:814.0px;line-height:16px;transform:scaleX(0.8988);transform-origin:0 50%;">7102</span>
<div style="left:31px;top:829px;width:225px;height:1px;background:#ececec;"></div>
<span style="left:32px;top:830.0px;line-height:16px;letter-spacing:-0.131px;">Encoding</span>
<span style="left:145px;top:830.0px;line-height:16px;transform:scaleX(0.9118);transform-origin:0 50%;">UTF-8</span>
<div style="left:31px;top:845px;width:225px;height:1px;background:#ececec;"></div>
<span style="left:32px;top:846.0px;line-height:16px;letter-spacing:0.078px;">Endpoint</span>
<span style="left:145px;top:846.0px;line-height:16px;letter-spacing:0.134px;">http://localhost:80...</span>
<div style="left:31px;top:861px;width:225px;height:1px;background:#ececec;"></div>
<span style="left:32px;top:862.0px;line-height:16px;letter-spacing:0.299px;">Timeout</span>
<div style="left:31px;top:877px;width:225px;height:1px;background:#ececec;"></div>
<span style="left:32px;top:878.0px;line-height:16px;letter-spacing:-0.143px;">Bind Address</span>
<div style="left:31px;top:893px;width:225px;height:1px;background:#ececec;"></div>
<span style="left:32px;top:894.0px;line-height:16px;letter-spacing:-0.169px;">Follow Redirects</span>
<span style="left:145px;top:894.0px;line-height:16px;letter-spacing:0.078px;">true</span>
<div style="left:31px;top:909px;width:225px;height:1px;background:#ececec;"></div>
<div style="left:143px;top:782px;width:1px;height:131px;background:#ececec;"></div>
<div style="left:256px;top:782px;width:1px;height:131px;background:#6d6d6d;"></div>
<div style="left:257px;top:782px;width:14px;height:131px;background:#fff;"></div>
<div style="left:257px;top:783px;width:14px;height:14px;background:linear-gradient(90deg,#fbfbfb,#dcdcdc);"></div>
<div style="left:257px;top:898px;width:14px;height:15px;background:linear-gradient(90deg,#fbfbfb,#dcdcdc);"></div>
<svg style="left:259.5px;top:787px;" width="9" height="5" viewBox="0 0 9 5"><path d="M0 5 L4.5 0 L9 5 Z" fill="#000"/></svg>
<svg style="left:259.5px;top:903px;" width="9" height="5" viewBox="0 0 9 5"><path d="M0 0 L4.5 5 L9 0 Z" fill="#000"/></svg>
<div style="left:256px;top:797px;width:15px;height:26px;background:linear-gradient(90deg,#8098c6,#5f7db5 45%,#4c6aa6);border:1px solid #2f4f90;box-sizing:border-box;box-shadow:inset 1px 1px 0 #a8c8f0;"></div>
<div style="left:259px;top:801px;width:10px;height:18px;background:linear-gradient(90deg,#c8d8f0 1px,transparent 1px) 0px 0/4px 4px;-webkit-mask:linear-gradient(180deg,#000 1px,transparent 1px) 0 0px/4px 4px;mask:linear-gradient(180deg,#000 1px,transparent 1px) 0 0px/4px 4px;"></div>
<div style="left:259px;top:801px;width:10px;height:18px;background:linear-gradient(90deg,#c8d8f0 1px,transparent 1px) 2px 0/4px 4px;-webkit-mask:linear-gradient(180deg,#000 1px,transparent 1px) 0 2px/4px 4px;mask:linear-gradient(180deg,#000 1px,transparent 1px) 0 2px/4px 4px;"></div>
<div style="left:259px;top:801px;width:10px;height:18px;background:linear-gradient(90deg,#3a5590 1px,transparent 1px) 1px 0/4px 4px;-webkit-mask:linear-gradient(180deg,#000 1px,transparent 1px) 0 1px/4px 4px;mask:linear-gradient(180deg,#000 1px,transparent 1px) 0 1px/4px 4px;"></div>
<div style="left:259px;top:801px;width:10px;height:18px;background:linear-gradient(90deg,#3a5590 1px,transparent 1px) 3px 0/4px 4px;-webkit-mask:linear-gradient(180deg,#000 1px,transparent 1px) 0 3px/4px 4px;mask:linear-gradient(180deg,#000 1px,transparent 1px) 0 3px/4px 4px;"></div>
<div style="left:38px;top:919.5px;width:61px;height:23px;background:#fff;border:1px solid #6b6b6b;border-radius:3px;box-sizing:border-box;"></div>
<span style="left:42px;top:924.0px;line-height:16px;letter-spacing:-0.170px;">Properties</span>
<div style="left:297px;top:117px;width:400px;height:24px;background:#dedede;border:1px solid #b4b4b4;border-bottom:1px solid #7f7f7f;box-sizing:border-box;"></div>
<svg style="left:303.5px;top:122px;" width="15" height="14" viewBox="0 0 15 14"><path d="M0.6 2 H8.8 V0.6 L13.9 3.7 L8.8 6.8 V5.4 H0.6 Z" fill="#fff" stroke="#6fcd85" stroke-width="1.1"/><rect x="1" y="3" width="1.3" height="1.3" fill="#f08030"/><path d="M14.3 8.2 H5.8 V6 L0 10 L5.8 14 V11.6 H14.3 Z" fill="#2bb24c"/></svg>
<span style="left:323.5px;top:121.5px;line-height:16px;font-weight:bold;letter-spacing:-0.081px;">MockService</span>
<div style="left:402px;top:121px;width:224px;height:16px;background:#e9e9e9;"></div>
<div style="left:402px;top:121px;width:224px;height:16px;background:linear-gradient(90deg,#fff 1px,transparent 1px) 0px 0/4px 4px;-webkit-mask:linear-gradient(180deg,#000 1px,transparent 1px) 0 0px/4px 4px;mask:linear-gradient(180deg,#000 1px,transparent 1px) 0 0px/4px 4px;"></div>
<div style="left:402px;top:121px;width:224px;height:16px;background:linear-gradient(90deg,#fff 1px,transparent 1px) 2px 0/4px 4px;-webkit-mask:linear-gradient(180deg,#000 1px,transparent 1px) 0 2px/4px 4px;mask:linear-gradient(180deg,#000 1px,transparent 1px) 0 2px/4px 4px;"></div>
<div style="left:402px;top:121px;width:224px;height:16px;background:linear-gradient(90deg,#5a5a5a 1px,transparent 1px) 1px 0/4px 4px;-webkit-mask:linear-gradient(180deg,#000 1px,transparent 1px) 0 1px/4px 4px;mask:linear-gradient(180deg,#000 1px,transparent 1px) 0 1px/4px 4px;"></div>
<div style="left:402px;top:121px;width:224px;height:16px;background:linear-gradient(90deg,#5a5a5a 1px,transparent 1px) 3px 0/4px 4px;-webkit-mask:linear-gradient(180deg,#000 1px,transparent 1px) 0 3px/4px 4px;mask:linear-gradient(180deg,#000 1px,transparent 1px) 0 3px/4px 4px;"></div>
<div style="left:629px;top:120px;width:17px;height:18px;background:#ececec;"></div>
<div style="left:648px;top:120px;width:17px;height:18px;background:#ececec;"></div>
<div style="left:675px;top:120px;width:18px;height:18px;background:#ececec;"></div>
<svg style="left:631px;top:122px;" width="14" height="14" viewBox="0 0 14 14"><rect x="1" y="8" width="5.5" height="5" fill="none" stroke="#222" stroke-width="2"/><path d="M13.2 0.8 L8 6" fill="none" stroke="#222" stroke-width="1.8"/><path d="M7.2 2.2 V6.8 H11.8" fill="none" stroke="#222" stroke-width="1.8"/></svg>
<svg style="left:650px;top:122px;" width="15" height="14" viewBox="0 0 15 14"><rect x="1" y="5" width="8.5" height="8" fill="none" stroke="#222" stroke-width="2"/><path d="M2 12 L13 1.5" fill="none" stroke="#222" stroke-width="1.8"/><path d="M8.6 1 H13.6 V6" fill="none" stroke="#222" stroke-width="1.8"/></svg>
<svg style="left:677px;top:122px;" width="14" height="14" viewBox="0 0 14 14"><rect x="1" y="1" width="12" height="12" fill="none" stroke="#222" stroke-width="2"/><path d="M4.2 4.2 L9.8 9.8 M9.8 4.2 L4.2 9.8" stroke="#222" stroke-width="2"/></svg>
<div style="left:297px;top:141px;width:1px;height:476px;background:#9a9a9a;"></div>
<div style="left:298px;top:141px;width:399px;height:26px;background:#fff;"></div>
<div style="left:297px;top:167px;width:400px;height:1px;background:#828282;"></div>
<svg style="left:303px;top:146px;" width="12" height="16" viewBox="0 0 12 16"><path d="M0 0 L12 8 L0 16 Z" fill="#a3a3a3"/></svg>
<div style="left:325px;top:147px;width:14px;height:14px;background:#ff6666;"></div>
<svg style="left:347px;top:147px;" width="14" height="14" viewBox="0 0 14 14"><path d="M0 2.4 H8.6 V0 L14 3.9 L8.6 7.6 V5.4 H0 Z" fill="#2bb24c"/><path d="M14 8.6 H5.4 V6.4 L0 10.1 L5.4 14 V11.6 H14 Z" fill="#2bb24c"/></svg>
<svg style="left:369px;top:147px;" width="14" height="14" viewBox="0 0 18 18"><g transform="translate(9 9)" fill="#929292"><rect x="-2.2" y="-9" width="4.4" height="18" rx="0.6" transform="rotate(0)"/><rect x="-2.2" y="-9" width="4.4" height="18" rx="0.6" transform="rotate(45)"/><rect x="-2.2" y="-9" width="4.4" height="18" rx="0.6" transform="rotate(90)"/><rect x="-2.2" y="-9" width="4.4" height="18" rx="0.6" transform="rotate(135)"/><circle r="6.6"/><circle r="2.7" fill="#fff"/></g></svg>
<span style="left:478px;top:147.0px;line-height:16px;letter-spacing:-0.038px;">running on port 8080</span>
<div style="left:597px;top:146px;width:108px;height:15px;border:1px solid #b8b8b8;background:#fff;"></div>
<div style="left:624px;top:147px;width:12px;height:15px;background:#4f6cab;"></div>
<div style="left:299px;top:168px;width:398px;height:312px;background:#fff;border-left:1px solid #828282;border-top:1px solid #828282;"></div>
<svg style="left:301px;top:172px;" width="79" height="21" viewBox="0 0 79 21"><path d="M0.5 21 V6 L5.5 0.5 H77.5 V21" fill="#f0f0f0" stroke="#6b6b6b"/></svg>
<span style="left:311.5px;top:175.0px;line-height:16px;letter-spacing:-0.120px;">Operations</span>
<svg style="left:306px;top:199px;" width="14" height="15" viewBox="0 0 14 15"><g transform="scale(1.08)"><g transform="translate(0.8 0.8)"><path d="M1 5.5 Q1.5 2.8 5 2.8 H9" fill="none" stroke="#d4d4d4" stroke-width="1.1" stroke-dasharray="1.3 0.9"/><path d="M7.3 0.6 L10.3 2.9 L7.3 5.2" fill="none" stroke="#d4d4d4" stroke-width="1.1"/><path d="M11.5 7.5 Q11 10.2 7.5 10.2 H3.5" fill="none" stroke="#d4d4d4" stroke-width="1.1" stroke-dasharray="1.3 0.9"/><path d="M5.2 7.9 L2.2 10.2 L5.2 12.5" fill="none" stroke="#d4d4d4" stroke-width="1.1"/></g><path d="M1 5.5 Q1.5 2.8 5 2.8 H9" fill="none" stroke="#e57878" stroke-width="1.1" stroke-dasharray="1.3 0.9"/><path d="M7.3 0.6 L10.3 2.9 L7.3 5.2" fill="none" stroke="#e57878" stroke-width="1.1"/><path d="M11.5 7.5 Q11 10.2 7.5 10.2 H3.5" fill="none" stroke="#e57878" stroke-width="1.1" stroke-dasharray="1.3 0.9"/><path d="M5.2 7.9 L2.2 10.2 L5.2 12.5" fill="none" stroke="#e57878" stroke-width="1.1"/></g></svg>
<div style="left:301px;top:221px;width:396px;height:224px;background:#fff;border:1px solid #7a7a7a;box-sizing:border-box;"></div>
<svg style="left:306px;top:225px;" width="14" height="15" viewBox="0 0 14 15"><g transform="scale(1.08)"><g transform="translate(0.8 0.8)"><path d="M1 5.5 Q1.5 2.8 5 2.8 H9" fill="none" stroke="#d4d4d4" stroke-width="1.1" stroke-dasharray="1.3 0.9"/><path d="M7.3 0.6 L10.3 2.9 L7.3 5.2" fill="none" stroke="#d4d4d4" stroke-width="1.1"/><path d="M11.5 7.5 Q11 10.2 7.5 10.2 H3.5" fill="none" stroke="#d4d4d4" stroke-width="1.1" stroke-dasharray="1.3 0.9"/><path d="M5.2 7.9 L2.2 10.2 L5.2 12.5" fill="none" stroke="#d4d4d4" stroke-width="1.1"/></g><path d="M1 5.5 Q1.5 2.8 5 2.8 H9" fill="none" stroke="#e57878" stroke-width="1.1" stroke-dasharray="1.3 0.9"/><path d="M7.3 0.6 L10.3 2.9 L7.3 5.2" fill="none" stroke="#e57878" stroke-width="1.1"/><path d="M11.5 7.5 Q11 10.2 7.5 10.2 H3.5" fill="none" stroke="#e57878" stroke-width="1.1" stroke-dasharray="1.3 0.9"/><path d="M5.2 7.9 L2.2 10.2 L5.2 12.5" fill="none" stroke="#e57878" stroke-width="1.1"/></g></svg>
<span style="left:325px;top:226.0px;line-height:16px;letter-spacing:-0.300px;">RequestEndOfSupply</span>
<svg style="left:306px;top:247px;" width="14" height="15" viewBox="0 0 14 15"><g transform="scale(1.08)"><g transform="translate(0.8 0.8)"><path d="M1 5.5 Q1.5 2.8 5 2.8 H9" fill="none" stroke="#d4d4d4" stroke-width="1.1" stroke-dasharray="1.3 0.9"/><path d="M7.3 0.6 L10.3 2.9 L7.3 5.2" fill="none" stroke="#d4d4d4" stroke-width="1.1"/><path d="M11.5 7.5 Q11 10.2 7.5 10.2 H3.5" fill="none" stroke="#d4d4d4" stroke-width="1.1" stroke-dasharray="1.3 0.9"/><path d="M5.2 7.9 L2.2 10.2 L5.2 12.5" fill="none" stroke="#d4d4d4" stroke-width="1.1"/></g><path d="M1 5.5 Q1.5 2.8 5 2.8 H9" fill="none" stroke="#e57878" stroke-width="1.1" stroke-dasharray="1.3 0.9"/><path d="M7.3 0.6 L10.3 2.9 L7.3 5.2" fill="none" stroke="#e57878" stroke-width="1.1"/><path d="M11.5 7.5 Q11 10.2 7.5 10.2 H3.5" fill="none" stroke="#e57878" stroke-width="1.1" stroke-dasharray="1.3 0.9"/><path d="M5.2 7.9 L2.2 10.2 L5.2 12.5" fill="none" stroke="#e57878" stroke-width="1.1"/></g></svg>
<span style="left:325px;top:248.0px;line-height:16px;letter-spacing:-0.220px;">RequestStartOfSupply</span>
<svg style="left:306px;top:269px;" width="14" height="15" viewBox="0 0 14 15"><g transform="scale(1.08)"><g transform="translate(0.8 0.8)"><path d="M1 5.5 Q1.5 2.8 5 2.8 H9" fill="none" stroke="#d4d4d4" stroke-width="1.1" stroke-dasharray="1.3 0.9"/><path d="M7.3 0.6 L10.3 2.9 L7.3 5.2" fill="none" stroke="#d4d4d4" stroke-width="1.1"/><path d="M11.5 7.5 Q11 10.2 7.5 10.2 H3.5" fill="none" stroke="#d4d4d4" stroke-width="1.1" stroke-dasharray="1.3 0.9"/><path d="M5.2 7.9 L2.2 10.2 L5.2 12.5" fill="none" stroke="#d4d4d4" stroke-width="1.1"/></g><path d="M1 5.5 Q1.5 2.8 5 2.8 H9" fill="none" stroke="#e57878" stroke-width="1.1" stroke-dasharray="1.3 0.9"/><path d="M7.3 0.6 L10.3 2.9 L7.3 5.2" fill="none" stroke="#e57878" stroke-width="1.1"/><path d="M11.5 7.5 Q11 10.2 7.5 10.2 H3.5" fill="none" stroke="#e57878" stroke-width="1.1" stroke-dasharray="1.3 0.9"/><path d="M5.2 7.9 L2.2 10.2 L5.2 12.5" fill="none" stroke="#e57878" stroke-width="1.1"/></g></svg>
<span style="left:325px;top:270.0px;line-height:16px;letter-spacing:-0.014px;">RequestUpdateCustomerInformation</span>
<svg style="left:306px;top:291px;" width="14" height="15" viewBox="0 0 14 15"><g transform="scale(1.08)"><g transform="translate(0.8 0.8)"><path d="M1 5.5 Q1.5 2.8 5 2.8 H9" fill="none" stroke="#d4d4d4" stroke-width="1.1" stroke-dasharray="1.3 0.9"/><path d="M7.3 0.6 L10.3 2.9 L7.3 5.2" fill="none" stroke="#d4d4d4" stroke-width="1.1"/><path d="M11.5 7.5 Q11 10.2 7.5 10.2 H3.5" fill="none" stroke="#d4d4d4" stroke-width="1.1" stroke-dasharray="1.3 0.9"/><path d="M5.2 7.9 L2.2 10.2 L5.2 12.5" fill="none" stroke="#d4d4d4" stroke-width="1.1"/></g><path d="M1 5.5 Q1.5 2.8 5 2.8 H9" fill="none" stroke="#e57878" stroke-width="1.1" stroke-dasharray="1.3 0.9"/><path d="M7.3 0.6 L10.3 2.9 L7.3 5.2" fill="none" stroke="#e57878" stroke-width="1.1"/><path d="M11.5 7.5 Q11 10.2 7.5 10.2 H3.5" fill="none" stroke="#e57878" stroke-width="1.1" stroke-dasharray="1.3 0.9"/><path d="M5.2 7.9 L2.2 10.2 L5.2 12.5" fill="none" stroke="#e57878" stroke-width="1.1"/></g></svg>
<span style="left:325px;top:292.0px;line-height:16px;letter-spacing:-0.096px;">RequestUpdateMasterDataMeteringPoint</span>
<svg style="left:306px;top:313px;" width="14" height="15" viewBox="0 0 14 15"><g transform="scale(1.08)"><g transform="translate(0.8 0.8)"><path d="M1 5.5 Q1.5 2.8 5 2.8 H9" fill="none" stroke="#d4d4d4" stroke-width="1.1" stroke-dasharray="1.3 0.9"/><path d="M7.3 0.6 L10.3 2.9 L7.3 5.2" fill="none" stroke="#d4d4d4" stroke-width="1.1"/><path d="M11.5 7.5 Q11 10.2 7.5 10.2 H3.5" fill="none" stroke="#d4d4d4" stroke-width="1.1" stroke-dasharray="1.3 0.9"/><path d="M5.2 7.9 L2.2 10.2 L5.2 12.5" fill="none" stroke="#d4d4d4" stroke-width="1.1"/></g><path d="M1 5.5 Q1.5 2.8 5 2.8 H9" fill="none" stroke="#e57878" stroke-width="1.1" stroke-dasharray="1.3 0.9"/><path d="M7.3 0.6 L10.3 2.9 L7.3 5.2" fill="none" stroke="#e57878" stroke-width="1.1"/><path d="M11.5 7.5 Q11 10.2 7.5 10.2 H3.5" fill="none" stroke="#e57878" stroke-width="1.1" stroke-dasharray="1.3 0.9"/><path d="M5.2 7.9 L2.2 10.2 L5.2 12.5" fill="none" stroke="#e57878" stroke-width="1.1"/></g></svg>
<span style="left:325px;top:314.0px;line-height:16px;letter-spacing:-0.170px;">UpdateThirdPartyAccess</span>
<span style="left:318px;top:456.0px;line-height:16px;letter-spacing:-0.335px;">Descri...</span>
<span style="left:375px;top:456.0px;line-height:16px;letter-spacing:-0.194px;">Prop...</span>
<span style="left:425.5px;top:456.0px;line-height:16px;letter-spacing:-0.243px;">Start ...</span>
<span style="left:480px;top:456.0px;line-height:16px;letter-spacing:-0.254px;">Stop ...</span>
<span style="left:534px;top:456.0px;line-height:16px;transform:scaleX(0.9351);transform-origin:0 50%;">OnReques...</span>
<span style="left:611px;top:456.0px;line-height:16px;letter-spacing:-0.226px;">AfterRequ</span>
<div style="left:300px;top:478px;width:397px;height:1px;background:#d8d8d8;"></div>
<div style="left:298px;top:480px;width:399px;height:1px;background:#828282;"></div>
<div style="left:298px;top:481px;width:399px;height:31px;background:#fff;"></div>
<div style="left:306px;top:492px;width:13px;height:13px;background:#fff;border:1px solid #8e8f8f;box-sizing:border-box;"></div>
<svg style="left:308px;top:494px;" width="9" height="9" viewBox="0 0 9 9"><path d="M1 4.5 L3.5 7.5 L8 1.5" fill="none" stroke="#1f3b8c" stroke-width="1.7"/></svg>
<span style="left:326px;top:491.0px;line-height:16px;transform:scaleX(0.9365);transform-origin:0 50%;">Enable</span>
<svg style="left:368px;top:491px;" width="15" height="15" viewBox="0 0 15 15"><path d="M8 1 L14 6.5 L7.5 12.5 L2 7 Z" fill="#fff" stroke="#555" stroke-width="1.4"/><path d="M2.2 7 L5 4.2 L10.5 9.7 L7.5 12.5 Z" fill="#555"/><rect x="0" y="13.6" width="15" height="1.2" fill="#555"/></svg>
<svg style="left:392.5px;top:491px;" width="15" height="15" viewBox="0 0 18 18"><g transform="translate(9 9)" fill="#555"><rect x="-2.2" y="-9" width="4.4" height="18" rx="0.6" transform="rotate(0)"/><rect x="-2.2" y="-9" width="4.4" height="18" rx="0.6" transform="rotate(45)"/><rect x="-2.2" y="-9" width="4.4" height="18" rx="0.6" transform="rotate(90)"/><rect x="-2.2" y="-9" width="4.4" height="18" rx="0.6" transform="rotate(135)"/><circle r="6.6"/><circle r="2.7" fill="#fff"/></g></svg>
<div style="left:298px;top:512px;width:399px;height:60px;background:#fff;border:2px solid #828282;box-sizing:border-box;"></div>
<div style="left:310px;top:574px;width:77px;height:23px;background:#fff;border:1px solid #6b6b6b;border-radius:2px;box-sizing:border-box;"></div>
<span style="left:314px;top:578.0px;line-height:16px;letter-spacing:-0.277px;">Message Log</span>
<div style="left:298px;top:599px;width:399px;height:1px;background:#b8b8b8;"></div>
<span style="left:298px;top:601.0px;line-height:16px;letter-spacing:0.000px;">--</span>
<div style="left:297px;top:616px;width:400px;height:1px;background:#b8b8b8;"></div>
<div style="left:665px;top:124px;width:1229px;height:718px;background:#fff;border-left:1px solid #c4c4c4;"></div>
<div style="left:665px;top:124px;width:1229px;height:24px;background:#acd1f6;border-top:1px solid #c0c0c0;border-left:1px solid #c0c0c0;border-bottom:1px solid #6a6a6a;box-sizing:border-box;"></div>
<svg style="left:673px;top:128.5px;" width="14" height="16" viewBox="0 0 14 16"><text font-family="Liberation Sans,sans-serif" font-weight="bold" font-size="7.8" fill="#7d8088"><tspan x="0" y="6.8">S</tspan><tspan x="6.6" y="6.8">O</tspan><tspan x="0" y="15">A</tspan><tspan x="7" y="15">P</tspan></text></svg>
<span style="left:692px;top:129.0px;line-height:16px;font-weight:bold;letter-spacing:-0.280px;">ValidRequest</span>
<div style="left:770px;top:128px;width:1060px;height:16px;background:linear-gradient(90deg,#fff 1px,transparent 1px) 0px 0/4px 4px;-webkit-mask:linear-gradient(180deg,#000 1px,transparent 1px) 0 0px/4px 4px;mask:linear-gradient(180deg,#000 1px,transparent 1px) 0 0px/4px 4px;"></div>
<div style="left:770px;top:128px;width:1060px;height:16px;background:linear-gradient(90deg,#fff 1px,transparent 1px) 2px 0/4px 4px;-webkit-mask:linear-gradient(180deg,#000 1px,transparent 1px) 0 2px/4px 4px;mask:linear-gradient(180deg,#000 1px,transparent 1px) 0 2px/4px 4px;"></div>
<div style="left:770px;top:128px;width:1060px;height:16px;background:linear-gradient(90deg,#2b4590 1px,transparent 1px) 1px 0/4px 4px;-webkit-mask:linear-gradient(180deg,#000 1px,transparent 1px) 0 1px/4px 4px;mask:linear-gradient(180deg,#000 1px,transparent 1px) 0 1px/4px 4px;"></div>
<div style="left:770px;top:128px;width:1060px;height:16px;background:linear-gradient(90deg,#2b4590 1px,transparent 1px) 3px 0/4px 4px;-webkit-mask:linear-gradient(180deg,#000 1px,transparent 1px) 0 3px/4px 4px;mask:linear-gradient(180deg,#000 1px,transparent 1px) 0 3px/4px 4px;"></div>
<svg style="left:1836px;top:128px;" width="14" height="14" viewBox="0 0 14 14"><rect x="1" y="8" width="5.5" height="5" fill="none" stroke="#1f3a7a" stroke-width="2"/><path d="M13.2 0.8 L8 6" fill="none" stroke="#1f3a7a" stroke-width="1.8"/><path d="M7.2 2.2 V6.8 H11.8" fill="none" stroke="#1f3a7a" stroke-width="1.8"/></svg>
<svg style="left:1854px;top:128px;" width="15" height="14" viewBox="0 0 15 14"><rect x="1" y="5" width="8.5" height="8" fill="none" stroke="#1f3a7a" stroke-width="2"/><path d="M2 12 L13 1.5" fill="none" stroke="#1f3a7a" stroke-width="1.8"/><path d="M8.6 1 H13.6 V6" fill="none" stroke="#1f3a7a" stroke-width="1.8"/></svg>
<svg style="left:1880px;top:128px;" width="14" height="14" viewBox="0 0 14 14"><rect x="1" y="1" width="12" height="12" fill="none" stroke="#1f3a7a" stroke-width="2"/><path d="M4.2 4.2 L9.8 9.8 M9.8 4.2 L4.2 9.8" stroke="#1f3a7a" stroke-width="2"/></svg>
<svg style="left:671px;top:153px;" width="13" height="17" viewBox="0 0 13 17"><path d="M0 0 L13 8.5 L0 17 Z" fill="#4cc24c"/></svg>
<svg style="left:692px;top:153px;" width="16" height="16" viewBox="0 0 16 16"><path d="M1.8 8.6 L6.2 13 L14.2 5" fill="none" stroke="#5f5f5f" stroke-width="3.2"/><path d="M1 1 L5.6 5.6 M6 1.2 V6 H1.2" fill="none" stroke="#2bb24c" stroke-width="1.6"/></svg>
<svg style="left:716.5px;top:154px;" width="13" height="15" viewBox="0 0 13 15"><text font-family="Liberation Sans,sans-serif" font-weight="bold" font-size="7" fill="#a6a6a6"><tspan x="0" y="6">S</tspan><tspan x="5.6" y="6">O</tspan><tspan x="0" y="13.4">A</tspan><tspan x="6" y="13.4">P</tspan></text></svg>
<svg style="left:737px;top:154px;" width="13" height="13" viewBox="0 0 13 13"><rect x="0.7" y="0.7" width="11.6" height="11.6" fill="#fff" stroke="#111" stroke-width="1.4"/><path d="M3 6.5 A3.5 3.5 0 0 1 9 4" fill="none" stroke="#8a8aa8" stroke-width="1.1"/><path d="M10 6.5 A3.5 3.5 0 0 1 4 9" fill="none" stroke="#8a8aa8" stroke-width="1.1"/><path d="M3 3 H6 V4.3 H4.3 V6 H3 Z M10 10 H7 V8.7 H8.7 V7 H10 Z" fill="#1010c0"/></svg>
<svg style="left:761px;top:155px;" width="10" height="11" viewBox="0 0 10 11"><rect x="0.7" y="0.7" width="8.6" height="9.6" fill="#fff" stroke="#111" stroke-width="1.4"/></svg>
<svg style="left:782px;top:154px;" width="12" height="14" viewBox="0 0 12 14"><circle cx="6" cy="3" r="3" fill="#666"/><path d="M4.6 4 H7.4 L8.2 8.5 H3.8 Z" fill="#666"/><rect x="0" y="8.3" width="12" height="5.7" fill="#666"/></svg>
<svg style="left:804.5px;top:154px;" width="13" height="15" viewBox="0 0 13 15"><text font-family="Liberation Sans,sans-serif" font-weight="bold" font-size="7" fill="#a6a6a6"><tspan x="0" y="6">S</tspan><tspan x="5.6" y="6">O</tspan><tspan x="0" y="13.4">A</tspan><tspan x="6" y="13.4">P</tspan></text></svg>
<div style="left:825px;top:154px;width:14px;height:14px;background:#c2c2c2;"></div>
<div style="left:853px;top:152px;width:979px;height:20px;background:#fff;border:1px solid #7a7a7a;box-sizing:border-box;"></div>
<span style="left:856px;top:154.0px;line-height:16px;letter-spacing:-0.063px;">http://localhost:8080/WebService/services/MarketProcesses</span>
<div style="left:1816px;top:152px;width:16px;height:20px;background:#f4f4f4;border:1px solid #7a7a7a;border-radius:2px;box-sizing:border-box;"></div>
<svg style="left:1820px;top:160px;" width="8" height="5" viewBox="0 0 8 5"><path d="M0 0 L4 5 L8 0 Z" fill="#000"/></svg>
<svg style="left:1836px;top:155px;" width="15" height="13" viewBox="0 0 15 13"><path d="M1 3 H11 M1 3 V12 M4 12 V5 L11 12 Z" stroke="#9a9a9a" stroke-width="1.6" fill="#bdbdbd"/><rect x="10" y="1" width="4.5" height="4" fill="#9a9a9a"/></svg>
<svg style="left:1859px;top:156px;" width="11" height="11" viewBox="0 0 11 11"><path d="M5.5 0 V11 M0 5.5 H11" stroke="#333" stroke-width="1.3"/></svg>
<div style="left:1877px;top:150px;width:17px;height:22px;overflow:hidden;">
<svg style="left:1px;top:1px;" width="19" height="19" viewBox="0 0 18 18"><circle cx="9" cy="9" r="8.5" fill="#e8eef6" stroke="#b8c4d4"/><circle cx="9" cy="9" r="6.6" fill="#2f7fd6"/><text x="9" y="13.2" text-anchor="middle" font-family="Liberation Sans,sans-serif" font-weight="bold" font-size="12" fill="#fff">?</text></svg>
</div>
<div style="left:667px;top:174px;width:1227px;height:1px;background:#d0d0d0;"></div>
<svg style="left:669px;top:177px;" width="18" height="42" viewBox="0 0 18 42"><path d="M18 0.5 H6.5 L0.5 6.5 V41.5 H18" fill="#c0c0c0" stroke="#7a7a7a"/></svg>
<span style="left:0px;top:-8.0px;line-height:16px;letter-spacing:-0.562px;left:658.5px;top:187.5px;width:40px;text-align:center;transform:rotate(-90deg);line-height:16px;">XML</span>
<svg style="left:669px;top:213px;" width="18" height="34" viewBox="0 0 18 34"><path d="M18 0.5 H6.5 L0.5 6.5 V33.5 H18" fill="#f0f0f0" stroke="#7a7a7a"/></svg>
<span style="left:0px;top:-8.0px;line-height:16px;letter-spacing:-0.839px;left:658.5px;top:221.5px;width:40px;text-align:center;transform:rotate(-90deg);line-height:16px;">Raw</span>
<div style="left:689px;top:177px;width:549px;height:636px;background:#f0f0f0;border:1px solid #7a7a7a;box-sizing:border-box;"></div>
<div style="left:690px;top:178px;width:532px;height:617px;overflow:hidden;">
<span style="left:2px;top:3.0px;line-height:16px;letter-spacing:-0.135px;">POST http://localhost:8080/WebService/services/MarketProcesses HTTP/1.1</span>
<span style="left:2px;top:19.0px;line-height:16px;letter-spacing:0.008px;">Accept-Encoding: gzip,deflate</span>
<span style="left:2px;top:35.0px;line-height:16px;letter-spacing:0.007px;">Content-Type: text/xml;charset=UTF-8</span>
<span style="left:2px;top:51.0px;line-height:16px;letter-spacing:-0.138px;">SOAPAction: "RequestEndOfSupply"</span>
<span style="left:2px;top:67.0px;line-height:16px;letter-spacing:-0.080px;">Content-Length: 7108</span>
<span style="left:2px;top:83.0px;line-height:16px;letter-spacing:-0.162px;">Host: localhost:8080</span>
<span style="left:2px;top:99.0px;line-height:16px;letter-spacing:0.004px;">Connection: Keep-Alive</span>
<span style="left:2px;top:115.0px;line-height:16px;letter-spacing:-0.054px;">User-Agent: Apache-HttpClient/4.1.1 (java 1.5)</span>
<div style="left:2px;top:146px;width:530px;height:16px;background:#acd1f6;"></div>
<span style="left:2px;top:147.0px;line-height:16px;letter-spacing:0.039px;">&lt;soapenv:Envelope xmlns:soapenv="http://schemas.xmlsoap.org/soap/envelope/" xmlns:urn="urn:no:elhub</span>
<div style="left:2px;top:162px;width:530px;height:16px;background:#acd1f6;"></div>
<span style="left:12px;top:163.0px;line-height:16px;letter-spacing:-0.076px;">&lt;soapenv:Header&gt;&lt;wsse:Security xmlns:wsse="http://docs.oasis-open.org/wss/2004/01/oasis-200401-wss</span>
<div style="left:2px;top:178px;width:487.5px;height:16px;background:#acd1f6;"></div>
<span style="left:2px;top:179.0px;line-height:16px;letter-spacing:-0.288px;">/kge7Mv7WV8iDMjM7hcQPRA1Epo+PfjVQof6V/mC7ysjRUFwBF/jX6bJuauJSC7jLfpk2exR3rya</span>
<div style="left:2px;top:194px;width:483.0px;height:16px;background:#acd1f6;"></div>
<span style="left:2px;top:195.0px;line-height:16px;letter-spacing:-0.340px;">Py/5A26tvbEHLo3AOStGykEFb8s/WNK66rehBILY13/nU+IJw+qAe3V6/zqOPstpe45M8JVL/E8J</span>
<div style="left:2px;top:210px;width:510.0px;height:16px;background:#acd1f6;"></div>
<span style="left:2px;top:211.0px;line-height:16px;letter-spacing:-0.254px;">qnhcN5M3+lootykSqyXTWkuKOxYVygzI2gXNA53rL6XpsQ0mmMi1ckiUcOFvYGPyHIfbCxmRTJF1</span>
<div style="left:2px;top:226px;width:530px;height:16px;background:#acd1f6;"></div>
<span style="left:2px;top:227.0px;line-height:16px;letter-spacing:-0.168px;">F4ohbqe8coQG7y/68G8uTLeuvW1df5Gv1/Is2Q==&lt;/ds:SignatureValue&gt;&lt;ds:KeyInfo Id="KI-52B71A25225FFDB4</span>
<div style="left:2px;top:242px;width:530px;height:16px;background:#acd1f6;"></div>
<span style="left:12px;top:243.0px;line-height:16px;letter-spacing:-0.229px;">&lt;soapenv:Body wsu:Id="id-52B71A25225FFDB4CA144074863528729" xmlns:wsu="http://docs.oasis-open.org</span>
<div style="left:2px;top:258px;width:209.5px;height:16px;background:#acd1f6;"></div>
<span style="left:21px;top:259.0px;line-height:16px;letter-spacing:-0.235px;">&lt;urn:RequestEndOfSupplyRequest&gt;</span>
<div style="left:2px;top:274px;width:182.5px;height:16px;background:#acd1f6;"></div>
<span style="left:30px;top:275.0px;line-height:16px;letter-spacing:-0.211px;">&lt;urn1:RequestEndOfSupply&gt;</span>
<div style="left:2px;top:290px;width:118px;height:16px;background:#acd1f6;"></div>
<span style="left:39px;top:291.0px;line-height:16px;letter-spacing:-0.210px;">&lt;urn1:Header&gt;</span>
<div style="left:2px;top:306px;width:490px;height:16px;background:#acd1f6;"></div>
<span style="left:48px;top:307.0px;line-height:16px;letter-spacing:0.000px;">&lt;urn2:Identification&gt;cfb2d698-60db-4f97-a7e1-773cd3aecce1&lt;/urn2:Identification&gt;</span>
<div style="left:2px;top:322px;width:448px;height:16px;background:#acd1f6;"></div>
<span style="left:48px;top:323.0px;line-height:16px;letter-spacing:0.078px;">&lt;urn2:DocumentType listAgencyIdentifier="6"&gt;432&lt;/urn2:DocumentType&gt;</span>
<div style="left:2px;top:338px;width:390.5px;height:16px;background:#acd1f6;"></div>
<span style="left:48px;top:339.0px;line-height:16px;letter-spacing:-0.185px;">&lt;urn2:Creation&gt;2015-08-28T09:57:15.279+02:00&lt;/urn2:Creation&gt;</span>
<div style="left:2px;top:354px;width:231px;height:16px;background:#acd1f6;"></div>
<span style="left:48px;top:355.0px;line-height:16px;letter-spacing:-0.274px;">&lt;urn2:PhysicalSenderEnergyParty&gt;</span>
<div style="left:2px;top:370px;width:520px;height:16px;background:#acd1f6;"></div>
<span style="left:57.5px;top:371.0px;line-height:16px;letter-spacing:0.004px;">&lt;urn2:Identification schemeAgencyIdentifier="9"&gt;1234567890123&lt;/urn2:Identification&gt;</span>
<div style="left:2px;top:386px;width:236px;height:16px;background:#acd1f6;"></div>
<span style="left:48px;top:387.0px;line-height:16px;letter-spacing:-0.215px;">&lt;/urn2:PhysicalSenderEnergyParty&gt;</span>
<div style="left:2px;top:402px;width:231px;height:16px;background:#acd1f6;"></div>
<span style="left:48px;top:403.0px;line-height:16px;letter-spacing:-0.246px;">&lt;urn2:JuridicalSenderEnergyParty&gt;</span>
<div style="left:2px;top:418px;width:520px;height:16px;background:#acd1f6;"></div>
<span style="left:57.5px;top:419.0px;line-height:16px;letter-spacing:0.004px;">&lt;urn2:Identification schemeAgencyIdentifier="9"&gt;1234567890123&lt;/urn2:Identification&gt;</span>
<div style="left:2px;top:434px;width:236px;height:16px;background:#acd1f6;"></div>
<span style="left:48px;top:435.0px;line-height:16px;letter-spacing:-0.190px;">&lt;/urn2:JuridicalSenderEnergyParty&gt;</span>
<div style="left:2px;top:450px;width:244.5px;height:16px;background:#acd1f6;"></div>
<span style="left:48px;top:451.0px;line-height:16px;letter-spacing:-0.165px;">&lt;urn2:JuridicalRecipientEnergyParty&gt;</span>
<div style="left:2px;top:466px;width:520px;height:16px;background:#acd1f6;"></div>
<span style="left:57.5px;top:467.0px;line-height:16px;letter-spacing:0.004px;">&lt;urn2:Identification schemeAgencyIdentifier="9"&gt;9876543210123&lt;/urn2:Identification&gt;</span>
<div style="left:2px;top:482px;width:249px;height:16px;background:#acd1f6;"></div>
<span style="left:48px;top:483.0px;line-height:16px;letter-spacing:-0.129px;">&lt;/urn2:JuridicalRecipientEnergyParty&gt;</span>
<div style="left:2px;top:498px;width:123px;height:16px;background:#acd1f6;"></div>
<span style="left:39px;top:499.0px;line-height:16px;letter-spacing:-0.076px;">&lt;/urn1:Header&gt;</span>
<div style="left:2px;top:514px;width:197px;height:16px;background:#acd1f6;"></div>
<span style="left:39px;top:515.0px;line-height:16px;letter-spacing:-0.263px;">&lt;urn1:ProcessEnergyContext&gt;</span>
<div style="left:2px;top:530px;width:530px;height:16px;background:#acd1f6;"></div>
<span style="left:48px;top:531.0px;line-height:16px;letter-spacing:-0.182px;">&lt;urn2:EnergyBusinessProcess listAgencyIdentifier="89"&gt;BRS-NO-201&lt;/urn2:EnergyBusinessProcess&gt;</span>
<div style="left:2px;top:546px;width:530px;height:16px;background:#acd1f6;"></div>
<span style="left:48px;top:547.0px;line-height:16px;letter-spacing:-0.138px;">&lt;urn2:EnergyBusinessProcessRole listAgencyIdentifier="6"&gt;DDQ&lt;/urn2:EnergyBusinessProcessRole&gt;</span>
<div style="left:2px;top:562px;width:447px;height:16px;background:#acd1f6;"></div>
<span style="left:48px;top:563.0px;line-height:16px;letter-spacing:-0.058px;">&lt;urn2:EnergyIndustryClassification&gt;23&lt;/urn2:EnergyIndustryClassification&gt;</span>
<div style="left:2px;top:578px;width:202px;height:16px;background:#acd1f6;"></div>
<span style="left:39px;top:579.0px;line-height:16px;letter-spacing:-0.194px;">&lt;/urn1:ProcessEnergyContext&gt;</span>
<div style="left:2px;top:594px;width:169px;height:16px;background:#acd1f6;"></div>
<span style="left:39px;top:595.0px;line-height:16px;letter-spacing:-0.211px;">&lt;urn1:PayloadMPEvent&gt;</span>
<div style="left:2px;top:610px;width:491px;height:16px;background:#acd1f6;"></div>
<span style="left:48px;top:611.0px;line-height:16px;letter-spacing:-0.162px;">&lt;urn2:EndOfOccurrence&gt;2015-08-28T09:57:15.280+02:00&lt;/urn2:EndOfOccurrence&gt;</span>
</div>
<div style="left:1222px;top:178px;width:15px;height:618px;background:#fff;border-left:1px solid #8e8e8e;box-sizing:border-box;"></div>
<div style="left:1223px;top:178px;width:14px;height:15px;background:linear-gradient(90deg,#fbfbfb,#dcdcdc);"></div>
<div style="left:1223px;top:781px;width:14px;height:15px;background:linear-gradient(90deg,#fbfbfb,#dcdcdc);"></div>
<svg style="left:1225.5px;top:183px;" width="9" height="5" viewBox="0 0 9 5"><path d="M0 5 L4.5 0 L9 5 Z" fill="#000"/></svg>
<svg style="left:1225.5px;top:786px;" width="9" height="5" viewBox="0 0 9 5"><path d="M0 0 L4.5 5 L9 0 Z" fill="#000"/></svg>
<div style="left:1222px;top:193px;width:15px;height:322px;background:linear-gradient(90deg,#8098c6,#5f7db5 45%,#4c6aa6);border:1px solid #2f4f90;box-sizing:border-box;box-shadow:inset 1px 1px 0 #a8c8f0;"></div>
<div style="left:1225px;top:339px;width:10px;height:30px;background:linear-gradient(90deg,#c8d8f0 1px,transparent 1px) 0px 0/4px 4px;-webkit-mask:linear-gradient(180deg,#000 1px,transparent 1px) 0 0px/4px 4px;mask:linear-gradient(180deg,#000 1px,transparent 1px) 0 0px/4px 4px;"></div>
<div style="left:1225px;top:339px;width:10px;height:30px;background:linear-gradient(90deg,#c8d8f0 1px,transparent 1px) 2px 0/4px 4px;-webkit-mask:linear-gradient(180deg,#000 1px,transparent 1px) 0 2px/4px 4px;mask:linear-gradient(180deg,#000 1px,transparent 1px) 0 2px/4px 4px;"></div>
<div style="left:1225px;top:339px;width:10px;height:30px;background:linear-gradient(90deg,#3a5590 1px,transparent 1px) 1px 0/4px 4px;-webkit-mask:linear-gradient(180deg,#000 1px,transparent 1px) 0 1px/4px 4px;mask:linear-gradient(180deg,#000 1px,transparent 1px) 0 1px/4px 4px;"></div>
<div style="left:1225px;top:339px;width:10px;height:30px;background:linear-gradient(90deg,#3a5590 1px,transparent 1px) 3px 0/4px 4px;-webkit-mask:linear-gradient(180deg,#000 1px,transparent 1px) 0 3px/4px 4px;mask:linear-gradient(180deg,#000 1px,transparent 1px) 0 3px/4px 4px;"></div>
<div style="left:690px;top:796px;width:533px;height:16px;background:#fff;border:1px solid #8e8e8e;box-sizing:border-box;"></div>
<div style="left:691px;top:797px;width:15px;height:14px;background:linear-gradient(#fbfbfb,#dcdcdc);"></div>
<div style="left:1207px;top:797px;width:15px;height:14px;background:linear-gradient(#fbfbfb,#dcdcdc);"></div>
<svg style="left:695px;top:800px;" width="5" height="8" viewBox="0 0 5 8"><path d="M5 0 L0 4 L5 8 Z" fill="#000"/></svg>
<svg style="left:1213px;top:800px;" width="5" height="8" viewBox="0 0 5 8"><path d="M0 0 L5 4 L0 8 Z" fill="#000"/></svg>
<div style="left:705px;top:796px;width:17px;height:16px;background:linear-gradient(#8098c6,#5f7db5 45%,#4c6aa6);border:1px solid #2f4f90;box-sizing:border-box;box-shadow:inset 1px 1px 0 #a8c8f0;"></div>
<div style="left:708px;top:799px;width:11px;height:10px;background:linear-gradient(90deg,#c8d8f0 1px,transparent 1px) 0px 0/4px 4px;-webkit-mask:linear-gradient(180deg,#000 1px,transparent 1px) 0 0px/4px 4px;mask:linear-gradient(180deg,#000 1px,transparent 1px) 0 0px/4px 4px;"></div>
<div style="left:708px;top:799px;width:11px;height:10px;background:linear-gradient(90deg,#c8d8f0 1px,transparent 1px) 2px 0/4px 4px;-webkit-mask:linear-gradient(180deg,#000 1px,transparent 1px) 0 2px/4px 4px;mask:linear-gradient(180deg,#000 1px,transparent 1px) 0 2px/4px 4px;"></div>
<div style="left:708px;top:799px;width:11px;height:10px;background:linear-gradient(90deg,#3a5590 1px,transparent 1px) 1px 0/4px 4px;-webkit-mask:linear-gradient(180deg,#000 1px,transparent 1px) 0 1px/4px 4px;mask:linear-gradient(180deg,#000 1px,transparent 1px) 0 1px/4px 4px;"></div>
<div style="left:708px;top:799px;width:11px;height:10px;background:linear-gradient(90deg,#3a5590 1px,transparent 1px) 3px 0/4px 4px;-webkit-mask:linear-gradient(180deg,#000 1px,transparent 1px) 0 3px/4px 4px;mask:linear-gradient(180deg,#000 1px,transparent 1px) 0 3px/4px 4px;"></div>
<div style="left:1222px;top:796px;width:16px;height:16px;background:#fff;border:1px solid #7a7a7a;box-sizing:border-box;"></div>
<svg style="left:1224.5px;top:798px;" width="12" height="12" viewBox="0 0 12 12"><rect x="0.5" y="0.5" width="9" height="8" fill="#fff" stroke="#c87a2a"/><circle cx="6.5" cy="6.5" r="3" fill="none" stroke="#222" stroke-width="1.2"/><path d="M8.7 8.7 L11.5 11.5" stroke="#222" stroke-width="1.5"/></svg>
<div style="left:687px;top:813px;width:553px;height:1px;background:#8e8e8e;"></div>
<div style="left:1240px;top:175px;width:1px;height:648px;background:#8e8e8e;"></div>
<svg style="left:1242px;top:177px;" width="8" height="18" viewBox="0 0 8 18"><path d="M6.5 0.8 L2 4.2 L6.5 7.6" fill="none" stroke="#000" stroke-width="2.2"/><path d="M1.5 10.4 L6 13.8 L1.5 17.2" fill="none" stroke="#000" stroke-width="2.2"/></svg>
<div style="left:1250px;top:175px;width:1px;height:649px;background:#8e8e8e;"></div>
<div style="left:667px;top:823px;width:574px;height:1px;background:#d0d0d0;"></div>
<span style="left:666px;top:826.0px;line-height:16px;letter-spacing:-0.232px;">response time: 51ms (3543 bytes)</span>
<div style="left:666px;top:841px;width:1228px;height:1px;background:#c8c8c8;"></div>
<svg style="left:1254px;top:177px;" width="18" height="42" viewBox="0 0 18 42"><path d="M18 0.5 H6.5 L0.5 6.5 V41.5 H18" fill="#f0f0f0" stroke="#7a7a7a"/></svg>
<span style="left:0px;top:-8.0px;line-height:16px;letter-spacing:-0.562px;left:1243.5px;top:187.5px;width:40px;text-align:center;transform:rotate(-90deg);line-height:16px;">XML</span>
<svg style="left:1254px;top:213px;" width="18" height="34" viewBox="0 0 18 34"><path d="M18 0.5 H6.5 L0.5 6.5 V33.5 H18" fill="#bdbdbd" stroke="#7a7a7a"/></svg>
<span style="left:0px;top:-8.0px;line-height:16px;letter-spacing:-0.839px;left:1243.5px;top:221.5px;width:40px;text-align:center;transform:rotate(-90deg);line-height:16px;">Raw</span>
<div style="left:1274px;top:177px;width:620px;height:308px;background:#fff;border:1px solid #7a7a7a;border-right:none;box-sizing:border-box;"></div>
<div style="left:1275px;top:178px;width:12px;height:291px;background:#f7f7f7;"></div>
<div style="left:1287px;top:178px;width:1px;height:291px;background:#dcdcdc;"></div>
<div style="left:1290px;top:386px;width:590px;height:16px;background:linear-gradient(90deg,#e6ecf7,#f2f5fb 25%,#eef2fa);"></div>
<div style="left:1275px;top:178px;width:605px;height:291px;overflow:hidden;">
<svg style="left:2px;top:4.0px;" width="9" height="9" viewBox="0 0 9 9"><rect x="0.5" y="0.5" width="8" height="8" fill="#fff" stroke="#808080"/><rect x="2" y="4" width="5" height="1" fill="#808080"/></svg>
<span class="m" style="left:15px;top:0.5px;line-height:16px;font-size:11.667px;"><span style="color:#ff0000">&lt;</span><span style="color:#0000ff">soapenv:Envelope</span> <span style="color:#3f7f7f">xmlns:soapenv</span><span style="color:#000">=</span><span style="color:#dc009c">"http://schemas.xmlsoap.org/soap/envelope/"</span><span style="color:#ff0000">&gt;</span></span>
<svg style="left:2px;top:20.0px;" width="9" height="9" viewBox="0 0 9 9"><rect x="0.5" y="0.5" width="8" height="8" fill="#fff" stroke="#808080"/><rect x="2" y="4" width="5" height="1" fill="#808080"/></svg>
<span class="m" style="left:36px;top:16.5px;line-height:16px;font-size:11.667px;"><span style="color:#ff0000">&lt;</span><span style="color:#0000ff">soapenv:Header</span><span style="color:#ff0000">&gt;</span></span>
<svg style="left:2px;top:36.0px;" width="9" height="9" viewBox="0 0 9 9"><rect x="0.5" y="0.5" width="8" height="8" fill="#fff" stroke="#808080"/><rect x="2" y="4" width="5" height="1" fill="#808080"/></svg>
<span class="m" style="left:57px;top:32.5px;line-height:16px;font-size:11.667px;"><span style="color:#ff0000">&lt;</span><span style="color:#0000ff">wsse:Security</span> <span style="color:#3f7f7f">xmlns:wsse</span><span style="color:#000">=</span><span style="color:#dc009c">"http://docs.oasis-open.org/wss/2004/01/oasis-200401-wss-wssecurity-secext-1.0.xsd"</span><span style="color:#ff0000">&gt;</span></span>
<span class="m" style="left:78px;top:48.5px;line-height:16px;font-size:11.667px;"><span style="color:#ff0000">&lt;</span><span style="color:#0000ff">wsse:BinarySecurityToken</span> <span style="color:#3f7f7f">EncodingType</span><span style="color:#000">=</span><span style="color:#dc009c">"http://docs.oasis-open.org/wss/2004/01/oasis-200401-wss-soap-message-security-1.0#Base64Binary"</span><span style="color:#ff0000">&gt;</span></span>
<svg style="left:2px;top:68.0px;" width="9" height="9" viewBox="0 0 9 9"><rect x="0.5" y="0.5" width="8" height="8" fill="#fff" stroke="#808080"/><rect x="2" y="4" width="5" height="1" fill="#808080"/></svg>
<span class="m" style="left:78px;top:64.5px;line-height:16px;font-size:11.667px;"><span style="color:#ff0000">&lt;</span><span style="color:#0000ff">ds:Signature</span> <span style="color:#3f7f7f">Id</span><span style="color:#000">=</span><span style="color:#dc009c">"SIG-52B71A25225FFDB4CA1440749220476287"</span> <span style="color:#3f7f7f">xmlns:ds</span><span style="color:#000">=</span><span style="color:#dc009c">"http://www.w3.org/2000/09/xmldsig#"</span><span style="color:#ff0000">&gt;</span></span>
<svg style="left:2px;top:84.0px;" width="9" height="9" viewBox="0 0 9 9"><rect x="0.5" y="0.5" width="8" height="8" fill="#fff" stroke="#808080"/><rect x="2" y="4" width="5" height="1" fill="#808080"/></svg>
<span class="m" style="left:99px;top:80.5px;line-height:16px;font-size:11.667px;"><span style="color:#ff0000">&lt;</span><span style="color:#0000ff">ds:SignedInfo</span><span style="color:#ff0000">&gt;</span></span>
<svg style="left:2px;top:100.0px;" width="9" height="9" viewBox="0 0 9 9"><rect x="0.5" y="0.5" width="8" height="8" fill="#fff" stroke="#808080"/><rect x="2" y="4" width="5" height="1" fill="#808080"/></svg>
<span class="m" style="left:120px;top:96.5px;line-height:16px;font-size:11.667px;"><span style="color:#ff0000">&lt;</span><span style="color:#0000ff">ds:CanonicalizationMethod</span> <span style="color:#3f7f7f">Algorithm</span><span style="color:#000">=</span><span style="color:#dc009c">"http://www.w3.org/2001/10/xml-exc-c14n#"</span><span style="color:#ff0000">&gt;</span></span>
<span class="m" style="left:141px;top:112.5px;line-height:16px;font-size:11.667px;"><span style="color:#ff0000">&lt;</span><span style="color:#0000ff">ec:InclusiveNamespaces</span> <span style="color:#3f7f7f">PrefixList</span><span style="color:#000">=</span><span style="color:#dc009c">"soapenv"</span> <span style="color:#3f7f7f">xmlns:ec</span><span style="color:#000">=</span><span style="color:#dc009c">"http://www.w3.org/2001/10/xml-exc-c14n#"</span><span style="color:#ff0000">/&gt;</span></span>
<span class="m" style="left:120px;top:128.5px;line-height:16px;font-size:11.667px;"><span style="color:#ff0000">&lt;/</span><span style="color:#0000ff">ds:CanonicalizationMethod</span><span style="color:#ff0000">&gt;</span></span>
<span class="m" style="left:120px;top:144.5px;line-height:16px;font-size:11.667px;"><span style="color:#ff0000">&lt;</span><span style="color:#0000ff">ds:SignatureMethod</span> <span style="color:#3f7f7f">Algorithm</span><span style="color:#000">=</span><span style="color:#dc009c">"http://www.w3.org/2000/09/xmldsig#rsa-sha1"</span><span style="color:#ff0000">/&gt;</span></span>
<svg style="left:2px;top:164.0px;" width="9" height="9" viewBox="0 0 9 9"><rect x="0.5" y="0.5" width="8" height="8" fill="#fff" stroke="#808080"/><rect x="2" y="4" width="5" height="1" fill="#808080"/></svg>
<span class="m" style="left:120px;top:160.5px;line-height:16px;font-size:11.667px;"><span style="color:#ff0000">&lt;</span><span style="color:#0000ff">ds:Reference</span> <span style="color:#3f7f7f">URI</span><span style="color:#000">=</span><span style="color:#dc009c">"#id-52B71A25225FFDB4CA1440749220475286"</span><span style="color:#ff0000">&gt;</span></span>
<svg style="left:2px;top:180.0px;" width="9" height="9" viewBox="0 0 9 9"><rect x="0.5" y="0.5" width="8" height="8" fill="#fff" stroke="#808080"/><rect x="2" y="4" width="5" height="1" fill="#808080"/></svg>
<span class="m" style="left:141px;top:176.5px;line-height:16px;font-size:11.667px;"><span style="color:#ff0000">&lt;</span><span style="color:#0000ff">ds:Transforms</span><span style="color:#ff0000">&gt;</span></span>
<svg style="left:2px;top:196.0px;" width="9" height="9" viewBox="0 0 9 9"><rect x="0.5" y="0.5" width="8" height="8" fill="#fff" stroke="#808080"/><rect x="2" y="4" width="5" height="1" fill="#808080"/></svg>
<span class="m" style="left:162px;top:192.5px;line-height:16px;font-size:11.667px;"><span style="color:#ff0000">&lt;</span><span style="color:#0000ff">ds:Transform</span> <span style="color:#3f7f7f">Algorithm</span><span style="color:#000">=</span><span style="color:#dc009c">"http://www.w3.org/2001/10/xml-exc-c14n#"</span><span style="color:#ff0000">&gt;</span></span>
<span class="m" style="left:183px;top:208.5px;line-height:16px;font-size:11.667px;"><span style="color:#ff0000">&lt;</span><span style="color:#0000ff">ec:InclusiveNamespaces</span> <span style="color:#3f7f7f">PrefixList</span><span style="color:#000">=</span><span style="color:#dc009c">""</span> <span style="color:#3f7f7f">xmlns:ec</span><span style="color:#000">=</span><span style="color:#dc009c">"http://www.w3.org/2001/10/xml-exc-c14n#"</span><span style="color:#ff0000">/&gt;</span></span>
<span class="m" style="left:162px;top:224.5px;line-height:16px;font-size:11.667px;"><span style="color:#ff0000">&lt;/</span><span style="color:#0000ff">ds:Transform</span><span style="color:#ff0000">&gt;</span></span>
<span class="m" style="left:141px;top:240.5px;line-height:16px;font-size:11.667px;"><span style="color:#ff0000">&lt;/</span><span style="color:#0000ff">ds:Transforms</span><span style="color:#ff0000">&gt;</span></span>
<span class="m" style="left:141px;top:256.5px;line-height:16px;font-size:11.667px;"><span style="color:#ff0000">&lt;</span><span style="color:#0000ff">ds:DigestMethod</span> <span style="color:#3f7f7f">Algorithm</span><span style="color:#000">=</span><span style="color:#dc009c">"http://www.w3.org/2000/09/xmldsig#sha1"</span><span style="color:#ff0000">/&gt;</span></span>
<span class="m" style="left:141px;top:272.5px;line-height:16px;font-size:11.667px;"><span style="color:#ff0000">&lt;</span><span style="color:#0000ff">ds:DigestValue</span><span style="color:#ff0000">&gt;</span><span style="color:#000">4wkKXA3W8ElPEADUjptayvM79x0=</span><span style="color:#ff0000">&lt;/</span><span style="color:#0000ff">ds:DigestValue</span><span style="color:#ff0000">&gt;</span></span>
</div>
<div style="left:1880px;top:178px;width:14px;height:291px;background:#fff;border-left:1px solid #8e8e8e;box-sizing:border-box;"></div>
<div style="left:1881px;top:178px;width:13px;height:15px;background:linear-gradient(90deg,#fbfbfb,#dcdcdc);"></div>
<div style="left:1881px;top:454px;width:13px;height:15px;background:linear-gradient(90deg,#fbfbfb,#dcdcdc);"></div>
<svg style="left:1883.0px;top:183px;" width="9" height="5" viewBox="0 0 9 5"><path d="M0 5 L4.5 0 L9 5 Z" fill="#000"/></svg>
<svg style="left:1883.0px;top:459px;" width="9" height="5" viewBox="0 0 9 5"><path d="M0 0 L4.5 5 L9 0 Z" fill="#000"/></svg>
<div style="left:1880px;top:193px;width:14px;height:121px;background:linear-gradient(90deg,#8098c6,#5f7db5 45%,#4c6aa6);border:1px solid #2f4f90;box-sizing:border-box;box-shadow:inset 1px 1px 0 #a8c8f0;"></div>
<div style="left:1883px;top:238px;width:10px;height:30px;background:linear-gradient(90deg,#c8d8f0 1px,transparent 1px) 0px 0/4px 4px;-webkit-mask:linear-gradient(180deg,#000 1px,transparent 1px) 0 0px/4px 4px;mask:linear-gradient(180deg,#000 1px,transparent 1px) 0 0px/4px 4px;"></div>
<div style="left:1883px;top:238px;width:10px;height:30px;background:linear-gradient(90deg,#c8d8f0 1px,transparent 1px) 2px 0/4px 4px;-webkit-mask:linear-gradient(180deg,#000 1px,transparent 1px) 0 2px/4px 4px;mask:linear-gradient(180deg,#000 1px,transparent 1px) 0 2px/4px 4px;"></div>
<div style="left:1883px;top:238px;width:10px;height:30px;background:linear-gradient(90deg,#3a5590 1px,transparent 1px) 1px 0/4px 4px;-webkit-mask:linear-gradient(180deg,#000 1px,transparent 1px) 0 1px/4px 4px;mask:linear-gradient(180deg,#000 1px,transparent 1px) 0 1px/4px 4px;"></div>
<div style="left:1883px;top:238px;width:10px;height:30px;background:linear-gradient(90deg,#3a5590 1px,transparent 1px) 3px 0/4px 4px;-webkit-mask:linear-gradient(180deg,#000 1px,transparent 1px) 0 3px/4px 4px;mask:linear-gradient(180deg,#000 1px,transparent 1px) 0 3px/4px 4px;"></div>
<div style="left:1288px;top:469px;width:592px;height:16px;background:#fff;border:1px solid #8e8e8e;box-sizing:border-box;"></div>
<div style="left:1289px;top:470px;width:15px;height:14px;background:linear-gradient(#fbfbfb,#dcdcdc);"></div>
<div style="left:1864px;top:470px;width:15px;height:14px;background:linear-gradient(#fbfbfb,#dcdcdc);"></div>
<svg style="left:1293px;top:473px;" width="5" height="8" viewBox="0 0 5 8"><path d="M5 0 L0 4 L5 8 Z" fill="#000"/></svg>
<svg style="left:1870px;top:473px;" width="5" height="8" viewBox="0 0 5 8"><path d="M0 0 L5 4 L0 8 Z" fill="#000"/></svg>
<div style="left:1303px;top:469px;width:36px;height:16px;background:linear-gradient(#8098c6,#5f7db5 45%,#4c6aa6);border:1px solid #2f4f90;box-sizing:border-box;box-shadow:inset 1px 1px 0 #a8c8f0;"></div>
<div style="left:1307px;top:472px;width:28px;height:10px;background:linear-gradient(90deg,#c8d8f0 1px,transparent 1px) 0px 0/4px 4px;-webkit-mask:linear-gradient(180deg,#000 1px,transparent 1px) 0 0px/4px 4px;mask:linear-gradient(180deg,#000 1px,transparent 1px) 0 0px/4px 4px;"></div>
<div style="left:1307px;top:472px;width:28px;height:10px;background:linear-gradient(90deg,#c8d8f0 1px,transparent 1px) 2px 0/4px 4px;-webkit-mask:linear-gradient(180deg,#000 1px,transparent 1px) 0 2px/4px 4px;mask:linear-gradient(180deg,#000 1px,transparent 1px) 0 2px/4px 4px;"></div>
<div style="left:1307px;top:472px;width:28px;height:10px;background:linear-gradient(90deg,#3a5590 1px,transparent 1px) 1px 0/4px 4px;-webkit-mask:linear-gradient(180deg,#000 1px,transparent 1px) 0 1px/4px 4px;mask:linear-gradient(180deg,#000 1px,transparent 1px) 0 1px/4px 4px;"></div>
<div style="left:1307px;top:472px;width:28px;height:10px;background:linear-gradient(90deg,#3a5590 1px,transparent 1px) 3px 0/4px 4px;-webkit-mask:linear-gradient(180deg,#000 1px,transparent 1px) 0 3px/4px 4px;mask:linear-gradient(180deg,#000 1px,transparent 1px) 0 3px/4px 4px;"></div>
<div style="left:1275px;top:469px;width:13px;height:15px;background:#fff;"></div>
<div style="left:1274px;top:484px;width:620px;height:1px;background:#7a7a7a;"></div>
<div style="left:1880px;top:469px;width:14px;height:16px;background:#fff;border:1px solid #7a7a7a;box-sizing:border-box;"></div>
<svg style="left:1882px;top:471px;" width="12" height="12" viewBox="0 0 12 12"><rect x="0.5" y="0.5" width="9" height="8" fill="#fff" stroke="#c87a2a"/><circle cx="6.5" cy="6.5" r="3" fill="none" stroke="#222" stroke-width="1.2"/><path d="M8.7 8.7 L11.5 11.5" stroke="#222" stroke-width="1.5"/></svg>
<svg style="left:1276px;top:486px;" width="19" height="8" viewBox="0 0 19 8"><path d="M1 6.6 L4.5 2.6 L8 6.6" fill="none" stroke="#000" stroke-width="2.4"/><path d="M10.5 1.8 L14 5.8 L17.5 1.8" fill="none" stroke="#000" stroke-width="2.4"/></svg>
<div style="left:1274px;top:494px;width:620px;height:78px;background:#fff;border-top:2px solid #828282;border-left:1px solid #828282;border-bottom:1px solid #828282;box-sizing:border-box;"></div>
<span style="left:1276px;top:498.0px;line-height:16px;letter-spacing:0.075px;">line -1: null</span>
<div style="left:1271px;top:574px;width:623px;height:1px;background:#a0a0a0;"></div>
<span style="left:1258px;top:584.0px;line-height:16px;font-weight:bold;color:#2d4f9e;letter-spacing:-0.291px;">WS-Security processing results</span>
<div style="left:1255px;top:601px;width:639px;height:191px;background:#fff;border:1px solid #7a7a7a;border-right:none;box-sizing:border-box;"></div>
<div style="left:1256px;top:602px;width:638px;height:174px;overflow:hidden;">
<span style="left:0px;top:1.5px;line-height:16px;left:auto;right:627.3px;">d&gt;</span>
<span style="left:10.700000000000045px;top:1.5px;line-height:16px;transform:scaleX(0.9352);transform-origin:0 50%;">&lt;wsu:Expires&gt;</span>
<span style="left:86px;top:1.5px;line-height:16px;transform:scaleX(0.9219);transform-origin:0 50%;">2015-08-28T08:08:00.469Z</span>
<span style="left:222.4000000000001px;top:1.5px;line-height:16px;letter-spacing:-0.289px;">&lt;/wsu:Expires&gt;</span>
<span style="left:303px;top:1.5px;line-height:16px;letter-spacing:-0.045px;">&lt;/wsu:Timestamp&gt;,</span>
<span style="left:413.4000000000001px;top:1.5px;line-height:16px;letter-spacing:-0.212px;">action=32,</span>
<span style="left:472.20000000000005px;top:1.5px;line-height:16px;letter-spacing:0.111px;">token-element=[wsu:Timestam</span>
<span style="left:0px;top:19.5px;line-height:16px;left:auto;right:618.4000000000001px;">NO, </span>
<span style="left:19.59999999999991px;top:19.5px;line-height:16px;letter-spacing:-0.087px;">x509-certificate=[[</span>
<span style="left:122.40000000000009px;top:19.5px;line-height:16px;letter-spacing:-0.178px;">Version: V1  Subject: CN=Elhub, O=Statnett, C=NO  Signature Algorithm: SHA256withRSA, OID = 1</span>
<span style="left:0px;top:37.5px;line-height:16px;left:auto;right:614px;">Key:  </span>
<span style="left:24px;top:37.5px;line-height:16px;letter-spacing:-0.185px;">Sun RSA public key, 2048 bits  modulus:</span>
<span style="left:235.70000000000005px;top:37.5px;line-height:16px;transform:scaleX(0.8999);transform-origin:0 50%;">2695597627818067081056118972301701170407595639649196572637632299981</span>
</div>
<div style="left:1255px;top:776px;width:639px;height:16px;background:#fff;border:1px solid #8e8e8e;box-sizing:border-box;"></div>
<div style="left:1256px;top:777px;width:15px;height:14px;background:linear-gradient(#fbfbfb,#dcdcdc);"></div>
<div style="left:1878px;top:777px;width:15px;height:14px;background:linear-gradient(#fbfbfb,#dcdcdc);"></div>
<svg style="left:1260px;top:780px;" width="5" height="8" viewBox="0 0 5 8"><path d="M5 0 L0 4 L5 8 Z" fill="#000"/></svg>
<svg style="left:1884px;top:780px;" width="5" height="8" viewBox="0 0 5 8"><path d="M0 0 L5 4 L0 8 Z" fill="#000"/></svg>
<div style="left:1300px;top:776px;width:18px;height:16px;background:linear-gradient(#8098c6,#5f7db5 45%,#4c6aa6);border:1px solid #2f4f90;box-sizing:border-box;box-shadow:inset 1px 1px 0 #a8c8f0;"></div>
<div style="left:1304px;top:779px;width:11px;height:10px;background:linear-gradient(90deg,#c8d8f0 1px,transparent 1px) 0px 0/4px 4px;-webkit-mask:linear-gradient(180deg,#000 1px,transparent 1px) 0 0px/4px 4px;mask:linear-gradient(180deg,#000 1px,transparent 1px) 0 0px/4px 4px;"></div>
<div style="left:1304px;top:779px;width:11px;height:10px;background:linear-gradient(90deg,#c8d8f0 1px,transparent 1px) 2px 0/4px 4px;-webkit-mask:linear-gradient(180deg,#000 1px,transparent 1px) 0 2px/4px 4px;mask:linear-gradient(180deg,#000 1px,transparent 1px) 0 2px/4px 4px;"></div>
<div style="left:1304px;top:779px;width:11px;height:10px;background:linear-gradient(90deg,#3a5590 1px,transparent 1px) 1px 0/4px 4px;-webkit-mask:linear-gradient(180deg,#000 1px,transparent 1px) 0 1px/4px 4px;mask:linear-gradient(180deg,#000 1px,transparent 1px) 0 1px/4px 4px;"></div>
<div style="left:1304px;top:779px;width:11px;height:10px;background:linear-gradient(90deg,#3a5590 1px,transparent 1px) 3px 0/4px 4px;-webkit-mask:linear-gradient(180deg,#000 1px,transparent 1px) 0 3px/4px 4px;mask:linear-gradient(180deg,#000 1px,transparent 1px) 0 3px/4px 4px;"></div>
<span style="left:1267px;top:802.0px;line-height:16px;color:#000;letter-spacing:-0.305px;">Headers (5)</span>
<span style="left:1340px;top:802.0px;line-height:16px;color:#000;letter-spacing:0.020px;">Attachments (0)</span>
<span style="left:1437.5px;top:802.0px;line-height:16px;color:#a8a8a8;transform:scaleX(0.9321);transform-origin:0 50%;">SSL Info</span>
<span style="left:1493px;top:802.0px;line-height:16px;color:#000;transform:scaleX(0.8711);transform-origin:0 50%;">WSS (3)</span>
<span style="left:1545.5px;top:802.0px;line-height:16px;color:#a8a8a8;transform:scaleX(0.9048);transform-origin:0 50%;">JMS (0)</span>
<div style="left:1250px;top:823px;width:644px;height:1px;background:#b4b4b4;"></div>
<div style="left:1779px;top:825px;width:1px;height:16px;background:#d0d0d0;"></div>
<div style="left:1783px;top:827px;width:51px;height:10px;border:1px solid #b0b0b0;background:#fff;"></div>
<div style="left:1839px;top:825px;width:1px;height:16px;background:#d0d0d0;"></div>
<span style="left:1843px;top:826.0px;line-height:16px;transform:scaleX(0.9264);transform-origin:0 50%;">14 : 22</span>
<div style="left:441px;top:885px;width:160px;height:28px;background:#f0f0f0;border:1px solid #8e8e8e;box-sizing:border-box;"></div>
<div style="left:445px;top:889px;width:7px;height:20px;background:linear-gradient(90deg,#fff 1px,transparent 1px) 0px 0/4px 4px;-webkit-mask:linear-gradient(180deg,#000 1px,transparent 1px) 0 0px/4px 4px;mask:linear-gradient(180deg,#000 1px,transparent 1px) 0 0px/4px 4px;"></div>
<div style="left:445px;top:889px;width:7px;height:20px;background:linear-gradient(90deg,#fff 1px,transparent 1px) 2px 0/4px 4px;-webkit-mask:linear-gradient(180deg,#000 1px,transparent 1px) 0 2px/4px 4px;mask:linear-gradient(180deg,#000 1px,transparent 1px) 0 2px/4px 4px;"></div>
<div style="left:445px;top:889px;width:7px;height:20px;background:linear-gradient(90deg,#8a8a8a 1px,transparent 1px) 1px 0/4px 4px;-webkit-mask:linear-gradient(180deg,#000 1px,transparent 1px) 0 1px/4px 4px;mask:linear-gradient(180deg,#000 1px,transparent 1px) 0 1px/4px 4px;"></div>
<div style="left:445px;top:889px;width:7px;height:20px;background:linear-gradient(90deg,#8a8a8a 1px,transparent 1px) 3px 0/4px 4px;-webkit-mask:linear-gradient(180deg,#000 1px,transparent 1px) 0 3px/4px 4px;mask:linear-gradient(180deg,#000 1px,transparent 1px) 0 3px/4px 4px;"></div>
<div style="left:455px;top:888px;width:143px;height:23px;background:linear-gradient(#fff,#f4f4f4 60%,#e2e2e2);border:1px solid #6b6b6b;border-radius:3px;box-sizing:border-box;"></div>
<svg style="left:463px;top:892px;" width="15" height="14" viewBox="0 0 15 14"><path d="M0.6 2 H8.8 V0.6 L13.9 3.7 L8.8 6.8 V5.4 H0.6 Z" fill="#fff" stroke="#6fcd85" stroke-width="1.1"/><rect x="1" y="3" width="1.3" height="1.3" fill="#f08030"/><path d="M14.3 8.2 H5.8 V6 L0 10 L5.8 14 V11.6 H14.3 Z" fill="#2bb24c"/></svg>
<span style="left:482px;top:892.0px;line-height:16px;letter-spacing:-0.188px;">ElhubSoapFaultMo...</span>
<span style="left:297px;top:924.0px;line-height:16px;letter-spacing:-0.237px;">SoapUI log</span>
<span style="left:367.5px;top:924.0px;line-height:16px;letter-spacing:0.203px;">http log</span>
<span style="left:422px;top:924.0px;line-height:16px;letter-spacing:0.182px;">jetty log</span>
<span style="left:478px;top:924.0px;line-height:16px;letter-spacing:0.035px;">error log</span>
<span style="left:536px;top:924.0px;line-height:16px;letter-spacing:0.123px;">wsrm log</span>
<span style="left:598.5px;top:924.0px;line-height:16px;letter-spacing:0.181px;">memory log</span>
<span style="left:676px;top:924.0px;line-height:16px;letter-spacing:0.097px;">script log</span>
<div style="left:1898px;top:97px;width:1px;height:816px;background:#c8c8c8;"></div>
<div style="left:1898px;top:912px;width:22px;height:1px;background:#c8c8c8;"></div>
<span style="left:0px;top:-8.0px;line-height:16px;letter-spacing:0.293px;left:1876.5px;top:124.5px;width:60px;text-align:center;transform:rotate(90deg);line-height:16px;">Inspector</span>
<div style="left:0px;top:944px;width:26px;height:1px;background:#d0d0d0;"></div>
<div style="left:0px;top:945px;width:1920px;height:9px;background:linear-gradient(90deg,#7888a0 0,#8da1bf 40px,#a6bedc 90px,#a9c1e0 925px,#a4bcd9 930px,#a4bcd9 1640px,#8a98ae 1700px,#7f8ca2 1920px);"></div>
<div style="left:0px;top:945px;width:1920px;height:1px;background:#4f5c70;"></div>
<div style="left:122px;top:946px;width:58px;height:8px;background:linear-gradient(#dde8f5,#c6d6ea);border:1px solid #6f809a;border-bottom:none;border-radius:3px 3px 0 0;box-sizing:border-box;"></div>
<div style="left:245px;top:946px;width:51px;height:8px;background:linear-gradient(#dde8f5,#c6d6ea);border:1px solid #6f809a;border-bottom:none;border-radius:3px 3px 0 0;box-sizing:border-box;"></div>
<div style="left:307px;top:946px;width:58px;height:8px;background:linear-gradient(#dde8f5,#c6d6ea);border:1px solid #6f809a;border-bottom:none;border-radius:3px 3px 0 0;box-sizing:border-box;"></div>
<div style="left:369px;top:946px;width:58px;height:8px;background:linear-gradient(#dde8f5,#c6d6ea);border:1px solid #6f809a;border-bottom:none;border-radius:3px 3px 0 0;box-sizing:border-box;"></div>
<div style="left:431px;top:946px;width:58px;height:8px;background:linear-gradient(#dde8f5,#c6d6ea);border:1px solid #6f809a;border-bottom:none;border-radius:3px 3px 0 0;box-sizing:border-box;"></div>
<div style="left:494px;top:946px;width:50px;height:8px;background:linear-gradient(#dde8f5,#c6d6ea);border:1px solid #6f809a;border-bottom:none;border-radius:3px 3px 0 0;box-sizing:border-box;"></div>
<div style="left:556px;top:946px;width:56px;height:8px;background:linear-gradient(#dde8f5,#c6d6ea);border:1px solid #6f809a;border-bottom:none;border-radius:3px 3px 0 0;box-sizing:border-box;"></div>
<div style="left:618px;top:946px;width:57px;height:8px;background:linear-gradient(#dde8f5,#c6d6ea);border:1px solid #6f809a;border-bottom:none;border-radius:3px 3px 0 0;box-sizing:border-box;"></div>
<div style="left:680px;top:946px;width:57px;height:8px;background:linear-gradient(#dde8f5,#c6d6ea);border:1px solid #6f809a;border-bottom:none;border-radius:3px 3px 0 0;box-sizing:border-box;"></div>
<div style="left:742px;top:946px;width:49px;height:8px;background:linear-gradient(#dde8f5,#c6d6ea);border:1px solid #6f809a;border-bottom:none;border-radius:3px 3px 0 0;box-sizing:border-box;"></div>
<div style="left:804px;top:946px;width:57px;height:8px;background:linear-gradient(#dde8f5,#c6d6ea);border:1px solid #6f809a;border-bottom:none;border-radius:3px 3px 0 0;box-sizing:border-box;"></div>
<div style="left:866px;top:946px;width:58px;height:8px;background:linear-gradient(#dde8f5,#c6d6ea);border:1px solid #6f809a;border-bottom:none;border-radius:3px 3px 0 0;box-sizing:border-box;"></div>
<div style="left:12px;top:947px;width:29px;height:14px;background:#b4cee9;border-radius:50%;border:1px solid #4f6484;"></div>
<div style="left:84px;top:949px;width:16px;height:8px;background:#5a9fe0;border-radius:50%;border-top:2px solid #f0c020;"></div>
<div style="left:138px;top:951px;width:16px;height:3px;background:#d8b860;"></div>
<div style="left:262px;top:950px;width:14px;height:8px;background:#e05a50;border-radius:50%;"></div>
<div style="left:324px;top:949px;width:16px;height:8px;background:#e87a70;border-radius:50%;"></div>
<div style="left:384px;top:950px;width:18px;height:8px;background:#5a5a9a;border-radius:50%;"></div>
<div style="left:706px;top:950px;width:18px;height:8px;background:#a01818;border-radius:50%;"></div>
<div style="left:822px;top:951px;width:16px;height:8px;background:#f05a6a;border-radius:50%;"></div>
<div style="left:1905px;top:946px;width:15px;height:8px;background:#8e99ab;border-left:1px solid #5f6b7c;"></div>
</body></html>
